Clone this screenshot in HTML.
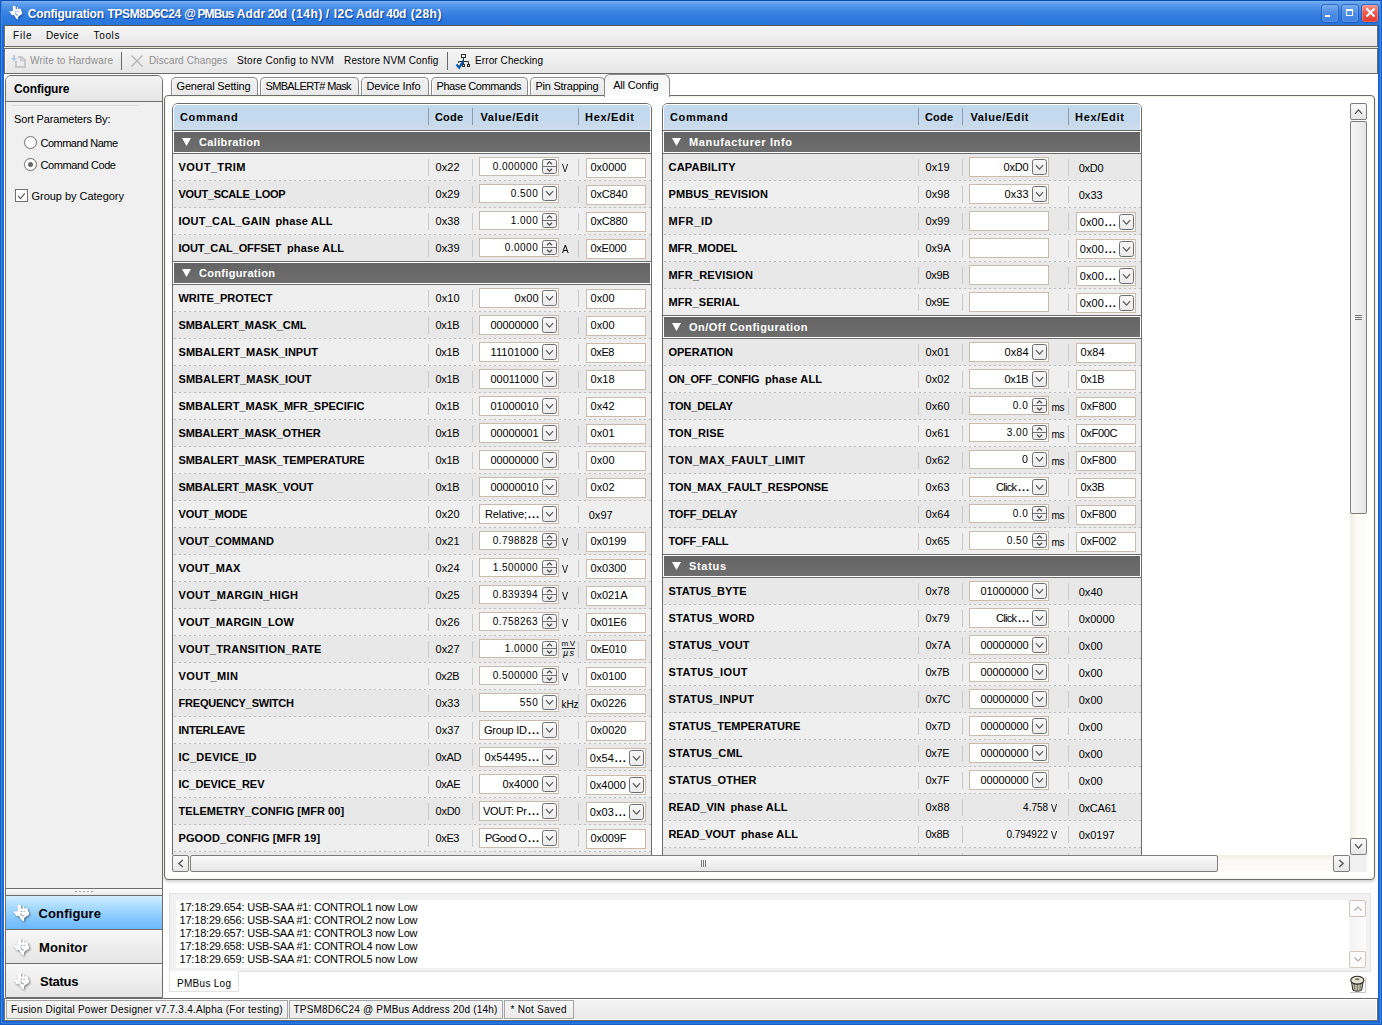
<!DOCTYPE html>
<html><head><meta charset="utf-8"><title>Configuration</title>
<style>
html,body{margin:0;padding:0}
body{width:1382px;height:1025px;overflow:hidden;position:relative;background:#2a70db;font-family:"Liberation Sans",sans-serif;color:#000}
div,svg,span{position:absolute;display:block}
span{white-space:pre;line-height:14px;height:14px}
.tr{font-size:11px}
.tr10{font-size:10px}
.tr9{font-size:9px}
.tr8{font-size:8px}
.tr9i{font-size:9px;font-style:italic}
.tb{font-size:11px;font-weight:bold}
.ms{font-size:10px}
.b12{font-size:12px;font-weight:bold}
.b13{font-size:13px;font-weight:bold}
.ttl{font-size:12px;font-weight:bold;text-shadow:1px 1px 1px #0c3c9c}
</style></head>
<body>
<div style="left:0px;top:0px;width:1382px;height:1025px;background:#1f6cd6"></div>
<div style="left:0px;top:0px;width:1382px;height:25px;background:linear-gradient(#0a4cb0 0,#0a4cb0 1px,#79b1f4 1px,#6fa9f1 2px,#5e9dec 4px,#4389e4 10px,#2f7bdf 17px,#2875dc 25px)"></div>
<div style="left:0px;top:0px;width:1px;height:1025px;background:#1a5cc2"></div>
<div style="left:1px;top:1px;width:1px;height:1023px;background:#3b88e4"></div>
<div style="left:2px;top:25px;width:2px;height:997px;background:#1c6ad5"></div>
<div style="left:1378px;top:25px;width:1px;height:997px;background:#1660cc"></div>
<div style="left:1379px;top:25px;width:1px;height:997px;background:#2070d8"></div>
<div style="left:1380px;top:1px;width:1px;height:1023px;background:#3b87e3"></div>
<div style="left:1381px;top:0px;width:1px;height:1025px;background:#1c60c8"></div>
<div style="left:2px;top:1021px;width:1378px;height:1px;background:#1b64d0"></div>
<div style="left:2px;top:1022px;width:1378px;height:1px;background:#2070d8"></div>
<div style="left:1px;top:1023px;width:1380px;height:1px;background:#2a7ade"></div>
<div style="left:0px;top:1024px;width:1382px;height:1px;background:#1a5cc4"></div>
<svg style="left:8.5px;top:6px;filter:drop-shadow(1px 1px 1px rgba(10,40,120,.5))" width="14" height="14" viewBox="0 0 17 17"><path d="M4.7 0H8v3l1.5 1 .5-2.8h1v2.6l1-.5h2.5l.5 2.7 1.1 1.5-.3 2.5L13 11.5 11.2 13l-.4 3.4L9 15.5l-2-3-1.2-1.9-1.2.7-1.4-.3L2 8.5 0 6.7l4.7-.5z" fill="#fff"/><path d="M7.8 6.4h1.2M10.5 6.4h1.2M8 8.2c0 1.9.4 2.6 1.5 2.6h1.3" stroke="#2d74d6" stroke-width="1.1" fill="none"/></svg>
<span class="ttl" style="letter-spacing:-0.2px;left:27.8px;top:7px;color:#fff">Configuration</span>
<span class="ttl" style="letter-spacing:-0.4px;left:107.5px;top:7px;color:#fff">TPSM8D6C24</span>
<span class="ttl" style="left:184.3px;top:7px;color:#fff">@</span>
<span class="ttl" style="letter-spacing:-0.92px;left:197.5px;top:7px;color:#fff">PMBus</span>
<span class="ttl" style="letter-spacing:0.17px;left:236.7px;top:7px;color:#fff">Addr</span>
<span class="ttl" style="letter-spacing:-0.69px;left:267.7px;top:7px;color:#fff">20d</span>
<span class="ttl" style="letter-spacing:0.63px;left:291.3px;top:7px;color:#fff">(14h)</span>
<span class="ttl" style="left:325.8px;top:7px;color:#fff">/</span>
<span class="ttl" style="letter-spacing:0.31px;left:333.8px;top:7px;color:#fff">I2C</span>
<span class="ttl" style="left:356.1px;top:7px;color:#fff">Addr</span>
<span class="ttl" style="letter-spacing:-0.29px;left:386.3px;top:7px;color:#fff">40d</span>
<span class="ttl" style="letter-spacing:0.51px;left:410.7px;top:7px;color:#fff">(28h)</span>
<div style="left:1322px;top:4.5px;width:16px;height:17px;background:linear-gradient(#78acee,#4c8de5 50%,#3e83e2);border-radius:3px;box-shadow:0 0 0 1px rgba(20,70,170,.55), inset 0 0 0 1px #7fb0ef66"></div>
<div style="left:1342px;top:4.5px;width:16px;height:17px;background:linear-gradient(#78acee,#4c8de5 50%,#3e83e2);border-radius:3px;box-shadow:0 0 0 1px rgba(20,70,170,.55), inset 0 0 0 1px #7fb0ef66"></div>
<div style="left:1362px;top:4.5px;width:16px;height:17px;background:linear-gradient(#f39a92,#ea5a50 45%,#e5382f);border-radius:3px;box-shadow:0 0 0 1px rgba(20,70,170,.55), inset 0 0 0 1px #f4b0a866"></div>
<div style="left:1325px;top:15px;width:5px;height:2px;background:#fff"></div>
<div style="left:1346px;top:9px;width:7px;height:7px;border:1px solid #fff;border-top:2px solid #fff;box-sizing:border-box"></div>
<svg style="left:1364px;top:6px" width="13" height="13" viewBox="0 0 13 13"><path d="M2.5 2.5l8 8M10.5 2.5l-8 8" stroke="#fff" stroke-width="2.1"/></svg>
<div style="left:4px;top:25px;width:1374px;height:996px;background:#fff"></div>
<div style="left:4px;top:25px;width:1374px;height:22px;background:linear-gradient(#f6f6f6,#e7e7e7);border:1px solid #6a6a6a;border-top-color:#5d574f;box-sizing:border-box;box-shadow:inset 1px 1px 0 #fff"></div>
<div style="left:4px;top:47px;width:1374px;height:1px;background:#ece9d8"></div>
<span class="ms" style="letter-spacing:0.79px;left:13px;top:29px">File</span>
<span class="ms" style="letter-spacing:0.38px;left:46px;top:29px">Device</span>
<span class="ms" style="letter-spacing:0.66px;left:93.5px;top:29px">Tools</span>
<div style="left:4px;top:48px;width:1374px;height:26px;background:linear-gradient(#f5f5f5,#e6e6e6);border:1px solid #6a6a6a;box-sizing:border-box;box-shadow:inset 1px 1px 0 #fff"></div>
<span class="ms" style="letter-spacing:0.16px;left:30px;top:54px;color:#8e8e8e">Write to Hardware</span>
<span class="ms" style="letter-spacing:0.13px;left:149px;top:54px;color:#8e8e8e">Discard Changes</span>
<span class="ms" style="letter-spacing:0.29px;left:237px;top:54px">Store Config to NVM</span>
<span class="ms" style="letter-spacing:0.16px;left:344px;top:54px">Restore NVM Config</span>
<span class="ms" style="letter-spacing:0.1px;left:475px;top:54px">Error Checking</span>
<div style="left:121px;top:52px;width:1px;height:18px;background:#666"></div>
<div style="left:447px;top:52px;width:1px;height:18px;background:#666"></div>
<svg style="left:10px;top:54px" width="17" height="15" viewBox="0 0 17 15"><path d="M3 1h2v3h2L4 7.6 1 4h2z" fill="#b3cbe2"/><path d="M8 3h3.5L15 6v7H6V7" fill="none" stroke="#c9c9c9" stroke-width="2"/><path d="M11 3v3.5h3.5" fill="none" stroke="#c9c9c9" stroke-width="1.6"/></svg>
<svg style="left:130px;top:54px" width="14" height="14" viewBox="0 0 14 14"><path d="M1.5 1.5l11 11M12.5 1.5l-11 11" stroke="#b9b9b9" stroke-width="1.5" fill="none"/></svg>
<svg style="left:455px;top:53px" width="16" height="17" viewBox="0 0 16 17"><g fill="none" stroke="#2f2f2f" stroke-width="1"><rect x="6.5" y="1.5" width="4" height="3"/><path d="M8.5 5v6M3.5 10V8.5h10V11"/><rect x="7.5" y="11.5" width="2" height="2"/><rect x="12.5" y="11.5" width="2" height="2"/></g><path d="M1.4 11.5l2.8 3.1L8.4 7.6" fill="none" stroke="#0b5aa9" stroke-width="2.2"/></svg>
<div style="left:5px;top:75px;width:158px;height:923px;background:#f0f0f0;border:1px solid #6d6d6d;border-radius:6px 6px 0 0;box-sizing:border-box"></div>
<div style="left:6px;top:76px;width:156px;height:25px;background:linear-gradient(#f3f3f3,#e6e6e6);border-radius:5px 5px 0 0"></div>
<div style="left:6px;top:101px;width:156px;height:1px;background:#6d6d6d"></div>
<span class="b12" style="letter-spacing:-0.15px;left:14px;top:82px">Configure</span>
<div style="left:12px;top:105px;width:126px;height:1px;background:#d9d9d9"></div>
<span class="tr" style="letter-spacing:-0.14px;left:14px;top:112px">Sort Parameters By:</span>
<div style="left:24px;top:136px;width:13px;height:13px;border-radius:50%;border:1px solid #747474;background:radial-gradient(circle at 45% 40%,#fff 45%,#f0f0f0);box-sizing:border-box;box-shadow:0 0 1px #ccc"></div>
<div style="left:24px;top:158px;width:13px;height:13px;border-radius:50%;border:1px solid #747474;background:radial-gradient(circle at 45% 40%,#fff 45%,#f0f0f0);box-sizing:border-box;box-shadow:0 0 1px #ccc"></div>
<div style="left:28px;top:162px;width:5px;height:5px;border-radius:50%;background:#666"></div>
<span class="tr" style="letter-spacing:-0.51px;left:40.5px;top:136px">Command Name</span>
<span class="tr" style="letter-spacing:-0.42px;left:40.5px;top:158px">Command Code</span>
<div style="left:15px;top:189px;width:13px;height:13px;border:1px solid #707070;background:#fff;box-sizing:border-box"></div>
<svg style="left:15px;top:189px" width="13" height="13" viewBox="0 0 13 13"><path d="M3.2 6.9l2.3 2.7L9.8 4.4" fill="none" stroke="#555" stroke-width="1.15"/></svg>
<span class="tr" style="letter-spacing:-0.03px;left:31.5px;top:189px">Group by Category</span>
<div style="left:6px;top:888px;width:156px;height:1px;background:#6d6d6d"></div>
<div style="left:6px;top:889px;width:156px;height:6px;background:linear-gradient(#fafafa,#e9e9e9)"></div>
<div style="left:75px;top:891px;width:2px;height:1px;background:#a9a9a9"></div>
<div style="left:79px;top:891px;width:2px;height:1px;background:#a9a9a9"></div>
<div style="left:83px;top:891px;width:2px;height:1px;background:#a9a9a9"></div>
<div style="left:87px;top:891px;width:2px;height:1px;background:#a9a9a9"></div>
<div style="left:91px;top:891px;width:2px;height:1px;background:#a9a9a9"></div>
<div style="left:6px;top:895px;width:156px;height:1px;background:#6d6d6d"></div>
<div style="left:6px;top:896px;width:156px;height:33px;background:linear-gradient(#d2efff 0,#aadbff 32%,#86c8fe 68%,#6ab8fb 100%)"></div>
<div style="left:6px;top:929px;width:156px;height:1px;background:#6d6d6d"></div>
<div style="left:6px;top:930px;width:156px;height:33px;background:linear-gradient(#f7f7f7,#e5e5e5)"></div>
<div style="left:6px;top:963px;width:156px;height:1px;background:#6d6d6d"></div>
<div style="left:6px;top:964px;width:156px;height:33px;background:linear-gradient(#f7f7f7,#e5e5e5)"></div>
<svg style="left:13px;top:905px;filter:drop-shadow(1px 1px 1px rgba(0,0,0,.5))" width="17" height="17" viewBox="0 0 17 17"><path d="M4.7 0H8v3l1.5 1 .5-2.8h1v2.6l1-.5h2.5l.5 2.7 1.1 1.5-.3 2.5L13 11.5 11.2 13l-.4 3.4L9 15.5l-2-3-1.2-1.9-1.2.7-1.4-.3L2 8.5 0 6.7l4.7-.5z" fill="#fff"/><path d="M7.8 6.4h1.2M10.5 6.4h1.2M8 8.2c0 1.9.4 2.6 1.5 2.6h1.3" stroke="#4f6f8c" stroke-width="1" fill="none" opacity=".8"/></svg>
<svg style="left:13px;top:939px;filter:drop-shadow(1px 1px 1px rgba(0,0,0,.5))" width="17" height="17" viewBox="0 0 17 17"><path d="M4.7 0H8v3l1.5 1 .5-2.8h1v2.6l1-.5h2.5l.5 2.7 1.1 1.5-.3 2.5L13 11.5 11.2 13l-.4 3.4L9 15.5l-2-3-1.2-1.9-1.2.7-1.4-.3L2 8.5 0 6.7l4.7-.5z" fill="#fff"/><path d="M7.8 6.4h1.2M10.5 6.4h1.2M8 8.2c0 1.9.4 2.6 1.5 2.6h1.3" stroke="#4f6f8c" stroke-width="1" fill="none" opacity=".8"/></svg>
<svg style="left:13px;top:973px;filter:drop-shadow(1px 1px 1px rgba(0,0,0,.5))" width="17" height="17" viewBox="0 0 17 17"><path d="M4.7 0H8v3l1.5 1 .5-2.8h1v2.6l1-.5h2.5l.5 2.7 1.1 1.5-.3 2.5L13 11.5 11.2 13l-.4 3.4L9 15.5l-2-3-1.2-1.9-1.2.7-1.4-.3L2 8.5 0 6.7l4.7-.5z" fill="#fff"/><path d="M7.8 6.4h1.2M10.5 6.4h1.2M8 8.2c0 1.9.4 2.6 1.5 2.6h1.3" stroke="#4f6f8c" stroke-width="1" fill="none" opacity=".8"/></svg>
<span class="b13" style="letter-spacing:0.14px;left:38.5px;top:907px">Configure</span>
<span class="b13" style="letter-spacing:0.14px;left:39px;top:941px">Monitor</span>
<span class="b13" style="letter-spacing:-0.25px;left:40px;top:975px">Status</span>
<div style="left:171px;top:77px;width:87px;height:19px;background:linear-gradient(#f2f2f2,#e9e9e9);border:1px solid #8a8a8a;border-bottom:none;border-radius:5px 5px 0 0;box-sizing:border-box;box-shadow:inset 1px 1px 0 #fff"></div>
<span class="tr" style="letter-spacing:-0.17px;left:176.5px;top:79px">General Setting</span>
<div style="left:260px;top:77px;width:99px;height:19px;background:linear-gradient(#f2f2f2,#e9e9e9);border:1px solid #8a8a8a;border-bottom:none;border-radius:5px 5px 0 0;box-sizing:border-box;box-shadow:inset 1px 1px 0 #fff"></div>
<span class="tr" style="letter-spacing:-0.66px;left:265.5px;top:79px">SMBALERT# Mask</span>
<div style="left:361px;top:77px;width:68px;height:19px;background:linear-gradient(#f2f2f2,#e9e9e9);border:1px solid #8a8a8a;border-bottom:none;border-radius:5px 5px 0 0;box-sizing:border-box;box-shadow:inset 1px 1px 0 #fff"></div>
<span class="tr" style="letter-spacing:-0.1px;left:366.5px;top:79px">Device Info</span>
<div style="left:431px;top:77px;width:97px;height:19px;background:linear-gradient(#f2f2f2,#e9e9e9);border:1px solid #8a8a8a;border-bottom:none;border-radius:5px 5px 0 0;box-sizing:border-box;box-shadow:inset 1px 1px 0 #fff"></div>
<span class="tr" style="letter-spacing:-0.42px;left:436.5px;top:79px">Phase Commands</span>
<div style="left:530px;top:77px;width:75px;height:19px;background:linear-gradient(#f2f2f2,#e9e9e9);border:1px solid #8a8a8a;border-bottom:none;border-radius:5px 5px 0 0;box-sizing:border-box;box-shadow:inset 1px 1px 0 #fff"></div>
<span class="tr" style="letter-spacing:-0.25px;left:535.5px;top:79px">Pin Strapping</span>
<div style="left:164px;top:95px;width:1211px;height:785px;background:#fff;border:1px solid #6d6d6d;border-radius:4px;box-sizing:border-box;box-shadow:0 2px 3px rgba(0,0,0,.18),inset 0 0 0 1px #f6f3ec"></div>
<div style="left:604px;top:74px;width:66px;height:23px;background:linear-gradient(#f5f5f5,#f8f8f8 70%,#fff);border:1px solid #8a8a8a;border-bottom:none;border-radius:6px 6px 0 0;box-sizing:border-box"></div>
<span class="tr" style="letter-spacing:-0.19px;left:613.2px;top:78px">All Config</span>
<div style="left:165px;top:96px;width:1185px;height:759px;overflow:hidden"><div style="left:-165px;top:-96px;width:1382px;height:1025px">
<div style="left:172px;top:103px;width:480px;height:760px;border:1px solid #6b6b6b;border-radius:6px 6px 0 0;background:#fff;box-sizing:border-box"></div>
<div style="left:173px;top:104px;width:478px;height:26px;background:linear-gradient(#c3d9ee 0,#c3d9ee 50%,#ccdcea 100%);border-radius:5px 5px 0 0;border:1px solid #fff;border-bottom:none;box-sizing:border-box"></div>
<div style="left:173px;top:130px;width:478px;height:1px;background:#6b6b6b"></div>
<span class="tb" style="letter-spacing:0.65px;left:180px;top:110px">Command</span>
<span class="tb" style="letter-spacing:0.17px;left:435px;top:110px">Code</span>
<span class="tb" style="letter-spacing:0.6px;left:480.5px;top:110px">Value/Edit</span>
<span class="tb" style="letter-spacing:0.71px;left:585px;top:110px">Hex/Edit</span>
<div style="left:428px;top:108px;width:1px;height:17px;background:#8d99a6"></div>
<div style="left:472px;top:108px;width:1px;height:17px;background:#8d99a6"></div>
<div style="left:578px;top:108px;width:1px;height:17px;background:#8d99a6"></div>
<div style="left:173px;top:131px;width:478px;height:23px;background:#fff"></div>
<div style="left:174px;top:132px;width:476px;height:20px;background:linear-gradient(#646464,#6e6e6e)"></div>
<div style="left:173px;top:153px;width:478px;height:1px;background:#6b6b6b"></div>
<svg style="left:182px;top:138px" width="9" height="8" viewBox="0 0 9 8"><path d="M0 0h9L4.5 8z" fill="#fff"/></svg>
<span class="tb" style="letter-spacing:0.35px;left:199px;top:135px;color:#fff">Calibration</span>
<div style="left:173px;top:154px;width:478px;height:27px;background:#efefef"></div>
<div style="left:173px;top:180px;width:478px;height:1px;background:repeating-linear-gradient(90deg,transparent 0,transparent 1px,#bcbcbc 1px,#bcbcbc 3px,transparent 3px,transparent 5px)"></div>
<div style="left:428px;top:159px;width:1px;height:17px;background:#c9c9c9"></div>
<div style="left:472px;top:159px;width:1px;height:17px;background:#c9c9c9"></div>
<div style="left:578px;top:159px;width:1px;height:17px;background:#c9c9c9"></div>
<span class="tb" style="letter-spacing:0.43px;left:178.5px;top:160px">VOUT_TRIM</span>
<span class="tr" style="letter-spacing:0.05px;left:435.5px;top:160px">0x22</span>
<div style="left:479px;top:157px;width:80px;height:19px;border:1px solid #c9bcae;background:#fff;box-sizing:border-box"></div>
<div style="left:542px;top:159px;width:15px;height:15px;border:1px solid #6e6e6e;border-radius:2.5px;background:linear-gradient(#f8f8f8,#ebebeb);box-sizing:border-box"></div>
<div style="left:543px;top:166px;width:13px;height:1px;background:#6e6e6e"></div>
<svg style="left:546px;top:160px" width="7" height="13" viewBox="0 0 7 13"><path d="M1 4.3l2.5-2.5L6 4.3M1 8.7l2.5 2.5L6 8.7" fill="none" stroke="#4a4a4a" stroke-width="1.25"/></svg>
<span class="tr10" style="letter-spacing:0.47px;right:843.83px;text-align:right;top:160px">0.000000</span>
<span class="tr10" style="transform:scaleX(0.914);transform-origin:0 0;left:561.5px;top:162px">V</span>
<div style="left:586px;top:158px;width:60px;height:20px;border:1px solid #c9bcae;background:#fff;box-sizing:border-box"></div>
<span class="tr" style="letter-spacing:-0.02px;left:590.5px;top:160px">0x0000</span>
<div style="left:173px;top:181px;width:478px;height:27px;background:#e8e8e8"></div>
<div style="left:173px;top:207px;width:478px;height:1px;background:repeating-linear-gradient(90deg,transparent 0,transparent 1px,#bcbcbc 1px,#bcbcbc 3px,transparent 3px,transparent 5px)"></div>
<div style="left:428px;top:186px;width:1px;height:17px;background:#c9c9c9"></div>
<div style="left:472px;top:186px;width:1px;height:17px;background:#c9c9c9"></div>
<div style="left:578px;top:186px;width:1px;height:17px;background:#c9c9c9"></div>
<span class="tb" style="letter-spacing:-0.3px;left:178.5px;top:187px">VOUT_SCALE_LOOP</span>
<span class="tr" style="letter-spacing:0.05px;left:435.5px;top:187px">0x29</span>
<div style="left:479px;top:184px;width:80px;height:19px;border:1px solid #c9bcae;background:#fff;box-sizing:border-box"></div>
<div style="left:542px;top:186px;width:15px;height:15px;border:1px solid #6e6e6e;border-radius:2.5px;background:linear-gradient(#f8f8f8,#ebebeb);box-sizing:border-box"></div>
<svg style="left:545px;top:190px" width="9" height="7" viewBox="0 0 9 7"><path d="M0.9 1.1l3.6 4.1 3.6-4.1" fill="none" stroke="#505050" stroke-width="1.05"/></svg>
<span class="tr10" style="letter-spacing:0.49px;right:843.81px;text-align:right;top:187px">0.500</span>
<div style="left:586px;top:185px;width:60px;height:20px;border:1px solid #c9bcae;background:#fff;box-sizing:border-box"></div>
<span class="tr" style="letter-spacing:-0.18px;left:590.5px;top:187px">0xC840</span>
<div style="left:173px;top:208px;width:478px;height:27px;background:#efefef"></div>
<div style="left:173px;top:234px;width:478px;height:1px;background:repeating-linear-gradient(90deg,transparent 0,transparent 1px,#bcbcbc 1px,#bcbcbc 3px,transparent 3px,transparent 5px)"></div>
<div style="left:428px;top:213px;width:1px;height:17px;background:#c9c9c9"></div>
<div style="left:472px;top:213px;width:1px;height:17px;background:#c9c9c9"></div>
<div style="left:578px;top:213px;width:1px;height:17px;background:#c9c9c9"></div>
<span class="tb" style="letter-spacing:0.24px;left:178.5px;top:214px">IOUT_CAL_GAIN</span>
<span class="tb" style="letter-spacing:0.15px;left:275.5px;top:214px">phase ALL</span>
<span class="tr" style="letter-spacing:0.05px;left:435.5px;top:214px">0x38</span>
<div style="left:479px;top:211px;width:80px;height:19px;border:1px solid #c9bcae;background:#fff;box-sizing:border-box"></div>
<div style="left:542px;top:213px;width:15px;height:15px;border:1px solid #6e6e6e;border-radius:2.5px;background:linear-gradient(#f8f8f8,#ebebeb);box-sizing:border-box"></div>
<div style="left:543px;top:220px;width:13px;height:1px;background:#6e6e6e"></div>
<svg style="left:546px;top:214px" width="7" height="13" viewBox="0 0 7 13"><path d="M1 4.3l2.5-2.5L6 4.3M1 8.7l2.5 2.5L6 8.7" fill="none" stroke="#4a4a4a" stroke-width="1.25"/></svg>
<span class="tr10" style="letter-spacing:0.49px;right:843.81px;text-align:right;top:214px">1.000</span>
<div style="left:586px;top:212px;width:60px;height:20px;border:1px solid #c9bcae;background:#fff;box-sizing:border-box"></div>
<span class="tr" style="letter-spacing:-0.18px;left:590.5px;top:214px">0xC880</span>
<div style="left:173px;top:235px;width:478px;height:27px;background:#e8e8e8"></div>
<div style="left:173px;top:261px;width:478px;height:1px;background:#6b6b6b"></div>
<div style="left:428px;top:240px;width:1px;height:17px;background:#c9c9c9"></div>
<div style="left:472px;top:240px;width:1px;height:17px;background:#c9c9c9"></div>
<div style="left:578px;top:240px;width:1px;height:17px;background:#c9c9c9"></div>
<span class="tb" style="letter-spacing:-0.11px;left:178.5px;top:241px">IOUT_CAL_OFFSET</span>
<span class="tb" style="letter-spacing:0.15px;left:287px;top:241px">phase ALL</span>
<span class="tr" style="letter-spacing:0.05px;left:435.5px;top:241px">0x39</span>
<div style="left:479px;top:238px;width:80px;height:19px;border:1px solid #c9bcae;background:#fff;box-sizing:border-box"></div>
<div style="left:542px;top:240px;width:15px;height:15px;border:1px solid #6e6e6e;border-radius:2.5px;background:linear-gradient(#f8f8f8,#ebebeb);box-sizing:border-box"></div>
<div style="left:543px;top:247px;width:13px;height:1px;background:#6e6e6e"></div>
<svg style="left:546px;top:241px" width="7" height="13" viewBox="0 0 7 13"><path d="M1 4.3l2.5-2.5L6 4.3M1 8.7l2.5 2.5L6 8.7" fill="none" stroke="#4a4a4a" stroke-width="1.25"/></svg>
<span class="tr10" style="letter-spacing:0.48px;right:843.82px;text-align:right;top:241px">0.0000</span>
<span class="tr10" style="transform:scaleX(0.989);transform-origin:0 0;left:561.5px;top:243px">A</span>
<div style="left:586px;top:239px;width:60px;height:20px;border:1px solid #c9bcae;background:#fff;box-sizing:border-box"></div>
<span class="tr" style="letter-spacing:-0.26px;left:590.5px;top:241px">0xE000</span>
<div style="left:173px;top:262px;width:478px;height:23px;background:#fff"></div>
<div style="left:174px;top:263px;width:476px;height:20px;background:linear-gradient(#646464,#6e6e6e)"></div>
<div style="left:173px;top:284px;width:478px;height:1px;background:#6b6b6b"></div>
<svg style="left:182px;top:269px" width="9" height="8" viewBox="0 0 9 8"><path d="M0 0h9L4.5 8z" fill="#fff"/></svg>
<span class="tb" style="letter-spacing:0.32px;left:199px;top:266px;color:#fff">Configuration</span>
<div style="left:173px;top:285px;width:478px;height:27px;background:#efefef"></div>
<div style="left:173px;top:311px;width:478px;height:1px;background:repeating-linear-gradient(90deg,transparent 0,transparent 1px,#bcbcbc 1px,#bcbcbc 3px,transparent 3px,transparent 5px)"></div>
<div style="left:428px;top:290px;width:1px;height:17px;background:#c9c9c9"></div>
<div style="left:472px;top:290px;width:1px;height:17px;background:#c9c9c9"></div>
<div style="left:578px;top:290px;width:1px;height:17px;background:#c9c9c9"></div>
<span class="tb" style="letter-spacing:-0.01px;left:178.5px;top:291px">WRITE_PROTECT</span>
<span class="tr" style="letter-spacing:0.05px;left:435.5px;top:291px">0x10</span>
<div style="left:479px;top:288px;width:80px;height:20px;border:1px solid #c9bcae;background:#fff;box-sizing:border-box"></div>
<div style="left:542px;top:290px;width:15px;height:16px;border:1px solid #6e6e6e;border-radius:2.5px;background:linear-gradient(#f8f8f8,#ebebeb);box-sizing:border-box"></div>
<svg style="left:545px;top:294.5px" width="9" height="7" viewBox="0 0 9 7"><path d="M0.9 1.1l3.6 4.1 3.6-4.1" fill="none" stroke="#505050" stroke-width="1.05"/></svg>
<span class="tr" style="letter-spacing:0.05px;right:843.45px;text-align:right;top:291px">0x00</span>
<div style="left:586px;top:289px;width:60px;height:20px;border:1px solid #c9bcae;background:#fff;box-sizing:border-box"></div>
<span class="tr" style="letter-spacing:0.05px;left:590.5px;top:291px">0x00</span>
<div style="left:173px;top:312px;width:478px;height:27px;background:#e8e8e8"></div>
<div style="left:173px;top:338px;width:478px;height:1px;background:repeating-linear-gradient(90deg,transparent 0,transparent 1px,#bcbcbc 1px,#bcbcbc 3px,transparent 3px,transparent 5px)"></div>
<div style="left:428px;top:317px;width:1px;height:17px;background:#c9c9c9"></div>
<div style="left:472px;top:317px;width:1px;height:17px;background:#c9c9c9"></div>
<div style="left:578px;top:317px;width:1px;height:17px;background:#c9c9c9"></div>
<span class="tb" style="letter-spacing:-0.1px;left:178.5px;top:318px">SMBALERT_MASK_CML</span>
<span class="tr" style="letter-spacing:-0.36px;left:435.5px;top:318px">0x1B</span>
<div style="left:479px;top:315px;width:80px;height:20px;border:1px solid #c9bcae;background:#fff;box-sizing:border-box"></div>
<div style="left:542px;top:317px;width:15px;height:16px;border:1px solid #6e6e6e;border-radius:2.5px;background:linear-gradient(#f8f8f8,#ebebeb);box-sizing:border-box"></div>
<svg style="left:545px;top:321.5px" width="9" height="7" viewBox="0 0 9 7"><path d="M0.9 1.1l3.6 4.1 3.6-4.1" fill="none" stroke="#505050" stroke-width="1.05"/></svg>
<span class="tr" style="letter-spacing:-0.14px;right:843.64px;text-align:right;top:318px">00000000</span>
<div style="left:586px;top:316px;width:60px;height:20px;border:1px solid #c9bcae;background:#fff;box-sizing:border-box"></div>
<span class="tr" style="letter-spacing:0.05px;left:590.5px;top:318px">0x00</span>
<div style="left:173px;top:339px;width:478px;height:27px;background:#efefef"></div>
<div style="left:173px;top:365px;width:478px;height:1px;background:repeating-linear-gradient(90deg,transparent 0,transparent 1px,#bcbcbc 1px,#bcbcbc 3px,transparent 3px,transparent 5px)"></div>
<div style="left:428px;top:344px;width:1px;height:17px;background:#c9c9c9"></div>
<div style="left:472px;top:344px;width:1px;height:17px;background:#c9c9c9"></div>
<div style="left:578px;top:344px;width:1px;height:17px;background:#c9c9c9"></div>
<span class="tb" style="letter-spacing:0.04px;left:178.5px;top:345px">SMBALERT_MASK_INPUT</span>
<span class="tr" style="letter-spacing:-0.36px;left:435.5px;top:345px">0x1B</span>
<div style="left:479px;top:342px;width:80px;height:20px;border:1px solid #c9bcae;background:#fff;box-sizing:border-box"></div>
<div style="left:542px;top:344px;width:15px;height:16px;border:1px solid #6e6e6e;border-radius:2.5px;background:linear-gradient(#f8f8f8,#ebebeb);box-sizing:border-box"></div>
<svg style="left:545px;top:348.5px" width="9" height="7" viewBox="0 0 9 7"><path d="M0.9 1.1l3.6 4.1 3.6-4.1" fill="none" stroke="#505050" stroke-width="1.05"/></svg>
<span class="tr" style="letter-spacing:0.1px;right:843.40px;text-align:right;top:345px">11101000</span>
<div style="left:586px;top:343px;width:60px;height:20px;border:1px solid #c9bcae;background:#fff;box-sizing:border-box"></div>
<span class="tr" style="letter-spacing:-0.36px;left:590.5px;top:345px">0xE8</span>
<div style="left:173px;top:366px;width:478px;height:27px;background:#e8e8e8"></div>
<div style="left:173px;top:392px;width:478px;height:1px;background:repeating-linear-gradient(90deg,transparent 0,transparent 1px,#bcbcbc 1px,#bcbcbc 3px,transparent 3px,transparent 5px)"></div>
<div style="left:428px;top:371px;width:1px;height:17px;background:#c9c9c9"></div>
<div style="left:472px;top:371px;width:1px;height:17px;background:#c9c9c9"></div>
<div style="left:578px;top:371px;width:1px;height:17px;background:#c9c9c9"></div>
<span class="tb" style="letter-spacing:0.06px;left:178.5px;top:372px">SMBALERT_MASK_IOUT</span>
<span class="tr" style="letter-spacing:-0.36px;left:435.5px;top:372px">0x1B</span>
<div style="left:479px;top:369px;width:80px;height:20px;border:1px solid #c9bcae;background:#fff;box-sizing:border-box"></div>
<div style="left:542px;top:371px;width:15px;height:16px;border:1px solid #6e6e6e;border-radius:2.5px;background:linear-gradient(#f8f8f8,#ebebeb);box-sizing:border-box"></div>
<svg style="left:545px;top:375.5px" width="9" height="7" viewBox="0 0 9 7"><path d="M0.9 1.1l3.6 4.1 3.6-4.1" fill="none" stroke="#505050" stroke-width="1.05"/></svg>
<span class="tr" style="letter-spacing:-0.02px;right:843.52px;text-align:right;top:372px">00011000</span>
<div style="left:586px;top:370px;width:60px;height:20px;border:1px solid #c9bcae;background:#fff;box-sizing:border-box"></div>
<span class="tr" style="letter-spacing:0.05px;left:590.5px;top:372px">0x18</span>
<div style="left:173px;top:393px;width:478px;height:27px;background:#efefef"></div>
<div style="left:173px;top:419px;width:478px;height:1px;background:repeating-linear-gradient(90deg,transparent 0,transparent 1px,#bcbcbc 1px,#bcbcbc 3px,transparent 3px,transparent 5px)"></div>
<div style="left:428px;top:398px;width:1px;height:17px;background:#c9c9c9"></div>
<div style="left:472px;top:398px;width:1px;height:17px;background:#c9c9c9"></div>
<div style="left:578px;top:398px;width:1px;height:17px;background:#c9c9c9"></div>
<span class="tb" style="letter-spacing:-0.02px;left:178.5px;top:399px">SMBALERT_MASK_MFR_SPECIFIC</span>
<span class="tr" style="letter-spacing:-0.36px;left:435.5px;top:399px">0x1B</span>
<div style="left:479px;top:396px;width:80px;height:20px;border:1px solid #c9bcae;background:#fff;box-sizing:border-box"></div>
<div style="left:542px;top:398px;width:15px;height:16px;border:1px solid #6e6e6e;border-radius:2.5px;background:linear-gradient(#f8f8f8,#ebebeb);box-sizing:border-box"></div>
<svg style="left:545px;top:402.5px" width="9" height="7" viewBox="0 0 9 7"><path d="M0.9 1.1l3.6 4.1 3.6-4.1" fill="none" stroke="#505050" stroke-width="1.05"/></svg>
<span class="tr" style="letter-spacing:-0.14px;right:843.64px;text-align:right;top:399px">01000010</span>
<div style="left:586px;top:397px;width:60px;height:20px;border:1px solid #c9bcae;background:#fff;box-sizing:border-box"></div>
<span class="tr" style="letter-spacing:0.05px;left:590.5px;top:399px">0x42</span>
<div style="left:173px;top:420px;width:478px;height:27px;background:#e8e8e8"></div>
<div style="left:173px;top:446px;width:478px;height:1px;background:repeating-linear-gradient(90deg,transparent 0,transparent 1px,#bcbcbc 1px,#bcbcbc 3px,transparent 3px,transparent 5px)"></div>
<div style="left:428px;top:425px;width:1px;height:17px;background:#c9c9c9"></div>
<div style="left:472px;top:425px;width:1px;height:17px;background:#c9c9c9"></div>
<div style="left:578px;top:425px;width:1px;height:17px;background:#c9c9c9"></div>
<span class="tb" style="letter-spacing:-0.12px;left:178.5px;top:426px">SMBALERT_MASK_OTHER</span>
<span class="tr" style="letter-spacing:-0.36px;left:435.5px;top:426px">0x1B</span>
<div style="left:479px;top:423px;width:80px;height:20px;border:1px solid #c9bcae;background:#fff;box-sizing:border-box"></div>
<div style="left:542px;top:425px;width:15px;height:16px;border:1px solid #6e6e6e;border-radius:2.5px;background:linear-gradient(#f8f8f8,#ebebeb);box-sizing:border-box"></div>
<svg style="left:545px;top:429.5px" width="9" height="7" viewBox="0 0 9 7"><path d="M0.9 1.1l3.6 4.1 3.6-4.1" fill="none" stroke="#505050" stroke-width="1.05"/></svg>
<span class="tr" style="letter-spacing:-0.14px;right:843.64px;text-align:right;top:426px">00000001</span>
<div style="left:586px;top:424px;width:60px;height:20px;border:1px solid #c9bcae;background:#fff;box-sizing:border-box"></div>
<span class="tr" style="letter-spacing:0.05px;left:590.5px;top:426px">0x01</span>
<div style="left:173px;top:447px;width:478px;height:27px;background:#efefef"></div>
<div style="left:173px;top:473px;width:478px;height:1px;background:repeating-linear-gradient(90deg,transparent 0,transparent 1px,#bcbcbc 1px,#bcbcbc 3px,transparent 3px,transparent 5px)"></div>
<div style="left:428px;top:452px;width:1px;height:17px;background:#c9c9c9"></div>
<div style="left:472px;top:452px;width:1px;height:17px;background:#c9c9c9"></div>
<div style="left:578px;top:452px;width:1px;height:17px;background:#c9c9c9"></div>
<span class="tb" style="letter-spacing:-0.11px;left:178.5px;top:453px">SMBALERT_MASK_TEMPERATURE</span>
<span class="tr" style="letter-spacing:-0.36px;left:435.5px;top:453px">0x1B</span>
<div style="left:479px;top:450px;width:80px;height:20px;border:1px solid #c9bcae;background:#fff;box-sizing:border-box"></div>
<div style="left:542px;top:452px;width:15px;height:16px;border:1px solid #6e6e6e;border-radius:2.5px;background:linear-gradient(#f8f8f8,#ebebeb);box-sizing:border-box"></div>
<svg style="left:545px;top:456.5px" width="9" height="7" viewBox="0 0 9 7"><path d="M0.9 1.1l3.6 4.1 3.6-4.1" fill="none" stroke="#505050" stroke-width="1.05"/></svg>
<span class="tr" style="letter-spacing:-0.14px;right:843.64px;text-align:right;top:453px">00000000</span>
<div style="left:586px;top:451px;width:60px;height:20px;border:1px solid #c9bcae;background:#fff;box-sizing:border-box"></div>
<span class="tr" style="letter-spacing:0.05px;left:590.5px;top:453px">0x00</span>
<div style="left:173px;top:474px;width:478px;height:27px;background:#e8e8e8"></div>
<div style="left:173px;top:500px;width:478px;height:1px;background:repeating-linear-gradient(90deg,transparent 0,transparent 1px,#bcbcbc 1px,#bcbcbc 3px,transparent 3px,transparent 5px)"></div>
<div style="left:428px;top:479px;width:1px;height:17px;background:#c9c9c9"></div>
<div style="left:472px;top:479px;width:1px;height:17px;background:#c9c9c9"></div>
<div style="left:578px;top:479px;width:1px;height:17px;background:#c9c9c9"></div>
<span class="tb" style="letter-spacing:-0.08px;left:178.5px;top:480px">SMBALERT_MASK_VOUT</span>
<span class="tr" style="letter-spacing:-0.36px;left:435.5px;top:480px">0x1B</span>
<div style="left:479px;top:477px;width:80px;height:20px;border:1px solid #c9bcae;background:#fff;box-sizing:border-box"></div>
<div style="left:542px;top:479px;width:15px;height:16px;border:1px solid #6e6e6e;border-radius:2.5px;background:linear-gradient(#f8f8f8,#ebebeb);box-sizing:border-box"></div>
<svg style="left:545px;top:483.5px" width="9" height="7" viewBox="0 0 9 7"><path d="M0.9 1.1l3.6 4.1 3.6-4.1" fill="none" stroke="#505050" stroke-width="1.05"/></svg>
<span class="tr" style="letter-spacing:-0.14px;right:843.64px;text-align:right;top:480px">00000010</span>
<div style="left:586px;top:478px;width:60px;height:20px;border:1px solid #c9bcae;background:#fff;box-sizing:border-box"></div>
<span class="tr" style="letter-spacing:0.05px;left:590.5px;top:480px">0x02</span>
<div style="left:173px;top:501px;width:478px;height:27px;background:#efefef"></div>
<div style="left:173px;top:527px;width:478px;height:1px;background:repeating-linear-gradient(90deg,transparent 0,transparent 1px,#bcbcbc 1px,#bcbcbc 3px,transparent 3px,transparent 5px)"></div>
<div style="left:428px;top:506px;width:1px;height:17px;background:#c9c9c9"></div>
<div style="left:472px;top:506px;width:1px;height:17px;background:#c9c9c9"></div>
<div style="left:578px;top:506px;width:1px;height:17px;background:#c9c9c9"></div>
<span class="tb" style="letter-spacing:-0.09px;left:178.5px;top:507px">VOUT_MODE</span>
<span class="tr" style="letter-spacing:0.05px;left:435.5px;top:507px">0x20</span>
<div style="left:479px;top:504px;width:80px;height:20px;border:1px solid #c9bcae;background:#fff;box-sizing:border-box"></div>
<div style="left:542px;top:506px;width:15px;height:16px;border:1px solid #6e6e6e;border-radius:2.5px;background:linear-gradient(#f8f8f8,#ebebeb);box-sizing:border-box"></div>
<svg style="left:545px;top:510.5px" width="9" height="7" viewBox="0 0 9 7"><path d="M0.9 1.1l3.6 4.1 3.6-4.1" fill="none" stroke="#505050" stroke-width="1.05"/></svg>
<span class="tr" style="letter-spacing:-0.1px;left:485px;top:507px">Relative;</span>
<span class="tb" style="letter-spacing:0.91px;left:528px;top:507px">...</span>
<span class="tr" style="letter-spacing:0.05px;left:588.7px;top:508px">0x97</span>
<div style="left:173px;top:528px;width:478px;height:27px;background:#e8e8e8"></div>
<div style="left:173px;top:554px;width:478px;height:1px;background:repeating-linear-gradient(90deg,transparent 0,transparent 1px,#bcbcbc 1px,#bcbcbc 3px,transparent 3px,transparent 5px)"></div>
<div style="left:428px;top:533px;width:1px;height:17px;background:#c9c9c9"></div>
<div style="left:472px;top:533px;width:1px;height:17px;background:#c9c9c9"></div>
<div style="left:578px;top:533px;width:1px;height:17px;background:#c9c9c9"></div>
<span class="tb" style="letter-spacing:0.01px;left:178.5px;top:534px">VOUT_COMMAND</span>
<span class="tr" style="letter-spacing:0.05px;left:435.5px;top:534px">0x21</span>
<div style="left:479px;top:531px;width:80px;height:19px;border:1px solid #c9bcae;background:#fff;box-sizing:border-box"></div>
<div style="left:542px;top:533px;width:15px;height:15px;border:1px solid #6e6e6e;border-radius:2.5px;background:linear-gradient(#f8f8f8,#ebebeb);box-sizing:border-box"></div>
<div style="left:543px;top:540px;width:13px;height:1px;background:#6e6e6e"></div>
<svg style="left:546px;top:534px" width="7" height="13" viewBox="0 0 7 13"><path d="M1 4.3l2.5-2.5L6 4.3M1 8.7l2.5 2.5L6 8.7" fill="none" stroke="#4a4a4a" stroke-width="1.25"/></svg>
<span class="tr10" style="letter-spacing:0.47px;right:843.83px;text-align:right;top:534px">0.798828</span>
<span class="tr10" style="transform:scaleX(0.914);transform-origin:0 0;left:561.5px;top:536px">V</span>
<div style="left:586px;top:532px;width:60px;height:20px;border:1px solid #c9bcae;background:#fff;box-sizing:border-box"></div>
<span class="tr" style="letter-spacing:-0.02px;left:590.5px;top:534px">0x0199</span>
<div style="left:173px;top:555px;width:478px;height:27px;background:#efefef"></div>
<div style="left:173px;top:581px;width:478px;height:1px;background:repeating-linear-gradient(90deg,transparent 0,transparent 1px,#bcbcbc 1px,#bcbcbc 3px,transparent 3px,transparent 5px)"></div>
<div style="left:428px;top:560px;width:1px;height:17px;background:#c9c9c9"></div>
<div style="left:472px;top:560px;width:1px;height:17px;background:#c9c9c9"></div>
<div style="left:578px;top:560px;width:1px;height:17px;background:#c9c9c9"></div>
<span class="tb" style="letter-spacing:0.12px;left:178.5px;top:561px">VOUT_MAX</span>
<span class="tr" style="letter-spacing:0.05px;left:435.5px;top:561px">0x24</span>
<div style="left:479px;top:558px;width:80px;height:19px;border:1px solid #c9bcae;background:#fff;box-sizing:border-box"></div>
<div style="left:542px;top:560px;width:15px;height:15px;border:1px solid #6e6e6e;border-radius:2.5px;background:linear-gradient(#f8f8f8,#ebebeb);box-sizing:border-box"></div>
<div style="left:543px;top:567px;width:13px;height:1px;background:#6e6e6e"></div>
<svg style="left:546px;top:561px" width="7" height="13" viewBox="0 0 7 13"><path d="M1 4.3l2.5-2.5L6 4.3M1 8.7l2.5 2.5L6 8.7" fill="none" stroke="#4a4a4a" stroke-width="1.25"/></svg>
<span class="tr10" style="letter-spacing:0.47px;right:843.83px;text-align:right;top:561px">1.500000</span>
<span class="tr10" style="transform:scaleX(0.914);transform-origin:0 0;left:561.5px;top:563px">V</span>
<div style="left:586px;top:559px;width:60px;height:20px;border:1px solid #c9bcae;background:#fff;box-sizing:border-box"></div>
<span class="tr" style="letter-spacing:-0.02px;left:590.5px;top:561px">0x0300</span>
<div style="left:173px;top:582px;width:478px;height:27px;background:#e8e8e8"></div>
<div style="left:173px;top:608px;width:478px;height:1px;background:repeating-linear-gradient(90deg,transparent 0,transparent 1px,#bcbcbc 1px,#bcbcbc 3px,transparent 3px,transparent 5px)"></div>
<div style="left:428px;top:587px;width:1px;height:17px;background:#c9c9c9"></div>
<div style="left:472px;top:587px;width:1px;height:17px;background:#c9c9c9"></div>
<div style="left:578px;top:587px;width:1px;height:17px;background:#c9c9c9"></div>
<span class="tb" style="letter-spacing:0.31px;left:178.5px;top:588px">VOUT_MARGIN_HIGH</span>
<span class="tr" style="letter-spacing:0.05px;left:435.5px;top:588px">0x25</span>
<div style="left:479px;top:585px;width:80px;height:19px;border:1px solid #c9bcae;background:#fff;box-sizing:border-box"></div>
<div style="left:542px;top:587px;width:15px;height:15px;border:1px solid #6e6e6e;border-radius:2.5px;background:linear-gradient(#f8f8f8,#ebebeb);box-sizing:border-box"></div>
<div style="left:543px;top:594px;width:13px;height:1px;background:#6e6e6e"></div>
<svg style="left:546px;top:588px" width="7" height="13" viewBox="0 0 7 13"><path d="M1 4.3l2.5-2.5L6 4.3M1 8.7l2.5 2.5L6 8.7" fill="none" stroke="#4a4a4a" stroke-width="1.25"/></svg>
<span class="tr10" style="letter-spacing:0.47px;right:843.83px;text-align:right;top:588px">0.839394</span>
<span class="tr10" style="transform:scaleX(0.914);transform-origin:0 0;left:561.5px;top:590px">V</span>
<div style="left:586px;top:586px;width:60px;height:20px;border:1px solid #c9bcae;background:#fff;box-sizing:border-box"></div>
<span class="tr" style="letter-spacing:-0.06px;left:590.5px;top:588px">0x021A</span>
<div style="left:173px;top:609px;width:478px;height:27px;background:#efefef"></div>
<div style="left:173px;top:635px;width:478px;height:1px;background:repeating-linear-gradient(90deg,transparent 0,transparent 1px,#bcbcbc 1px,#bcbcbc 3px,transparent 3px,transparent 5px)"></div>
<div style="left:428px;top:614px;width:1px;height:17px;background:#c9c9c9"></div>
<div style="left:472px;top:614px;width:1px;height:17px;background:#c9c9c9"></div>
<div style="left:578px;top:614px;width:1px;height:17px;background:#c9c9c9"></div>
<span class="tb" style="letter-spacing:0.17px;left:178.5px;top:615px">VOUT_MARGIN_LOW</span>
<span class="tr" style="letter-spacing:0.05px;left:435.5px;top:615px">0x26</span>
<div style="left:479px;top:612px;width:80px;height:19px;border:1px solid #c9bcae;background:#fff;box-sizing:border-box"></div>
<div style="left:542px;top:614px;width:15px;height:15px;border:1px solid #6e6e6e;border-radius:2.5px;background:linear-gradient(#f8f8f8,#ebebeb);box-sizing:border-box"></div>
<div style="left:543px;top:621px;width:13px;height:1px;background:#6e6e6e"></div>
<svg style="left:546px;top:615px" width="7" height="13" viewBox="0 0 7 13"><path d="M1 4.3l2.5-2.5L6 4.3M1 8.7l2.5 2.5L6 8.7" fill="none" stroke="#4a4a4a" stroke-width="1.25"/></svg>
<span class="tr10" style="letter-spacing:0.47px;right:843.83px;text-align:right;top:615px">0.758263</span>
<span class="tr10" style="transform:scaleX(0.914);transform-origin:0 0;left:561.5px;top:617px">V</span>
<div style="left:586px;top:613px;width:60px;height:20px;border:1px solid #c9bcae;background:#fff;box-sizing:border-box"></div>
<span class="tr" style="letter-spacing:-0.26px;left:590.5px;top:615px">0x01E6</span>
<div style="left:173px;top:636px;width:478px;height:27px;background:#e8e8e8"></div>
<div style="left:173px;top:662px;width:478px;height:1px;background:repeating-linear-gradient(90deg,transparent 0,transparent 1px,#bcbcbc 1px,#bcbcbc 3px,transparent 3px,transparent 5px)"></div>
<div style="left:428px;top:641px;width:1px;height:17px;background:#c9c9c9"></div>
<div style="left:472px;top:641px;width:1px;height:17px;background:#c9c9c9"></div>
<div style="left:578px;top:641px;width:1px;height:17px;background:#c9c9c9"></div>
<span class="tb" style="letter-spacing:0.2px;left:178.5px;top:642px">VOUT_TRANSITION_RATE</span>
<span class="tr" style="letter-spacing:0.05px;left:435.5px;top:642px">0x27</span>
<div style="left:479px;top:639px;width:80px;height:19px;border:1px solid #c9bcae;background:#fff;box-sizing:border-box"></div>
<div style="left:542px;top:641px;width:15px;height:15px;border:1px solid #6e6e6e;border-radius:2.5px;background:linear-gradient(#f8f8f8,#ebebeb);box-sizing:border-box"></div>
<div style="left:543px;top:648px;width:13px;height:1px;background:#6e6e6e"></div>
<svg style="left:546px;top:642px" width="7" height="13" viewBox="0 0 7 13"><path d="M1 4.3l2.5-2.5L6 4.3M1 8.7l2.5 2.5L6 8.7" fill="none" stroke="#4a4a4a" stroke-width="1.25"/></svg>
<span class="tr10" style="letter-spacing:0.48px;right:843.82px;text-align:right;top:642px">1.0000</span>
<span class="tr8" style="letter-spacing:1.5px;left:561.5px;top:637px">mV</span>
<div style="left:562px;top:648px;width:13px;height:1px;background:#222"></div>
<span class="tr9i" style="letter-spacing:1.31px;left:563px;top:646px">µs</span>
<div style="left:586px;top:640px;width:60px;height:20px;border:1px solid #c9bcae;background:#fff;box-sizing:border-box"></div>
<span class="tr" style="letter-spacing:-0.26px;left:590.5px;top:642px">0xE010</span>
<div style="left:173px;top:663px;width:478px;height:27px;background:#efefef"></div>
<div style="left:173px;top:689px;width:478px;height:1px;background:repeating-linear-gradient(90deg,transparent 0,transparent 1px,#bcbcbc 1px,#bcbcbc 3px,transparent 3px,transparent 5px)"></div>
<div style="left:428px;top:668px;width:1px;height:17px;background:#c9c9c9"></div>
<div style="left:472px;top:668px;width:1px;height:17px;background:#c9c9c9"></div>
<div style="left:578px;top:668px;width:1px;height:17px;background:#c9c9c9"></div>
<span class="tb" style="letter-spacing:0.38px;left:178.5px;top:669px">VOUT_MIN</span>
<span class="tr" style="letter-spacing:-0.36px;left:435.5px;top:669px">0x2B</span>
<div style="left:479px;top:666px;width:80px;height:19px;border:1px solid #c9bcae;background:#fff;box-sizing:border-box"></div>
<div style="left:542px;top:668px;width:15px;height:15px;border:1px solid #6e6e6e;border-radius:2.5px;background:linear-gradient(#f8f8f8,#ebebeb);box-sizing:border-box"></div>
<div style="left:543px;top:675px;width:13px;height:1px;background:#6e6e6e"></div>
<svg style="left:546px;top:669px" width="7" height="13" viewBox="0 0 7 13"><path d="M1 4.3l2.5-2.5L6 4.3M1 8.7l2.5 2.5L6 8.7" fill="none" stroke="#4a4a4a" stroke-width="1.25"/></svg>
<span class="tr10" style="letter-spacing:0.47px;right:843.83px;text-align:right;top:669px">0.500000</span>
<span class="tr10" style="transform:scaleX(0.914);transform-origin:0 0;left:561.5px;top:671px">V</span>
<div style="left:586px;top:667px;width:60px;height:20px;border:1px solid #c9bcae;background:#fff;box-sizing:border-box"></div>
<span class="tr" style="letter-spacing:-0.02px;left:590.5px;top:669px">0x0100</span>
<div style="left:173px;top:690px;width:478px;height:27px;background:#e8e8e8"></div>
<div style="left:173px;top:716px;width:478px;height:1px;background:repeating-linear-gradient(90deg,transparent 0,transparent 1px,#bcbcbc 1px,#bcbcbc 3px,transparent 3px,transparent 5px)"></div>
<div style="left:428px;top:695px;width:1px;height:17px;background:#c9c9c9"></div>
<div style="left:472px;top:695px;width:1px;height:17px;background:#c9c9c9"></div>
<div style="left:578px;top:695px;width:1px;height:17px;background:#c9c9c9"></div>
<span class="tb" style="letter-spacing:-0.2px;left:178.5px;top:696px">FREQUENCY_SWITCH</span>
<span class="tr" style="letter-spacing:0.05px;left:435.5px;top:696px">0x33</span>
<div style="left:479px;top:693px;width:80px;height:19px;border:1px solid #c9bcae;background:#fff;box-sizing:border-box"></div>
<div style="left:542px;top:695px;width:15px;height:15px;border:1px solid #6e6e6e;border-radius:2.5px;background:linear-gradient(#f8f8f8,#ebebeb);box-sizing:border-box"></div>
<svg style="left:545px;top:699px" width="9" height="7" viewBox="0 0 9 7"><path d="M0.9 1.1l3.6 4.1 3.6-4.1" fill="none" stroke="#505050" stroke-width="1.05"/></svg>
<span class="tr10" style="letter-spacing:0.66px;right:843.64px;text-align:right;top:696px">550</span>
<span class="tr10" style="letter-spacing:-0.12px;left:561.5px;top:698px">kHz</span>
<div style="left:586px;top:694px;width:60px;height:20px;border:1px solid #c9bcae;background:#fff;box-sizing:border-box"></div>
<span class="tr" style="letter-spacing:-0.02px;left:590.5px;top:696px">0x0226</span>
<div style="left:173px;top:717px;width:478px;height:27px;background:#efefef"></div>
<div style="left:173px;top:743px;width:478px;height:1px;background:repeating-linear-gradient(90deg,transparent 0,transparent 1px,#bcbcbc 1px,#bcbcbc 3px,transparent 3px,transparent 5px)"></div>
<div style="left:428px;top:722px;width:1px;height:17px;background:#c9c9c9"></div>
<div style="left:472px;top:722px;width:1px;height:17px;background:#c9c9c9"></div>
<div style="left:578px;top:722px;width:1px;height:17px;background:#c9c9c9"></div>
<span class="tb" style="letter-spacing:-0.26px;left:178.5px;top:723px">INTERLEAVE</span>
<span class="tr" style="letter-spacing:0.05px;left:435.5px;top:723px">0x37</span>
<div style="left:479px;top:720px;width:80px;height:20px;border:1px solid #c9bcae;background:#fff;box-sizing:border-box"></div>
<div style="left:542px;top:722px;width:15px;height:16px;border:1px solid #6e6e6e;border-radius:2.5px;background:linear-gradient(#f8f8f8,#ebebeb);box-sizing:border-box"></div>
<svg style="left:545px;top:726.5px" width="9" height="7" viewBox="0 0 9 7"><path d="M0.9 1.1l3.6 4.1 3.6-4.1" fill="none" stroke="#505050" stroke-width="1.05"/></svg>
<span class="tr" style="letter-spacing:-0.23px;left:484px;top:723px">Group ID</span>
<span class="tb" style="letter-spacing:0.91px;left:528px;top:723px">...</span>
<div style="left:586px;top:721px;width:60px;height:20px;border:1px solid #c9bcae;background:#fff;box-sizing:border-box"></div>
<span class="tr" style="letter-spacing:-0.02px;left:590.5px;top:723px">0x0020</span>
<div style="left:173px;top:744px;width:478px;height:27px;background:#e8e8e8"></div>
<div style="left:173px;top:770px;width:478px;height:1px;background:repeating-linear-gradient(90deg,transparent 0,transparent 1px,#bcbcbc 1px,#bcbcbc 3px,transparent 3px,transparent 5px)"></div>
<div style="left:428px;top:749px;width:1px;height:17px;background:#c9c9c9"></div>
<div style="left:472px;top:749px;width:1px;height:17px;background:#c9c9c9"></div>
<div style="left:578px;top:749px;width:1px;height:17px;background:#c9c9c9"></div>
<span class="tb" style="letter-spacing:0.25px;left:178.5px;top:750px">IC_DEVICE_ID</span>
<span class="tr" style="letter-spacing:-0.3px;left:435.5px;top:750px">0xAD</span>
<div style="left:479px;top:747px;width:80px;height:20px;border:1px solid #c9bcae;background:#fff;box-sizing:border-box"></div>
<div style="left:542px;top:749px;width:15px;height:16px;border:1px solid #6e6e6e;border-radius:2.5px;background:linear-gradient(#f8f8f8,#ebebeb);box-sizing:border-box"></div>
<svg style="left:545px;top:753.5px" width="9" height="7" viewBox="0 0 9 7"><path d="M0.9 1.1l3.6 4.1 3.6-4.1" fill="none" stroke="#505050" stroke-width="1.05"/></svg>
<span class="tr" style="letter-spacing:0.05px;left:484.5px;top:750px">0x54495</span>
<span class="tb" style="letter-spacing:0.91px;left:528px;top:750px">...</span>
<div style="left:586px;top:748px;width:60px;height:20px;border:1px solid #c9bcae;background:#fff;box-sizing:border-box"></div>
<span class="tr" style="letter-spacing:0.05px;left:589.8px;top:751px">0x54</span>
<span class="tb" style="letter-spacing:0.91px;left:614.8px;top:751px">...</span>
<div style="left:629px;top:750px;width:15px;height:16px;border:1px solid #6e6e6e;border-radius:2.5px;background:linear-gradient(#f8f8f8,#ebebeb);box-sizing:border-box"></div>
<svg style="left:632px;top:754.5px" width="9" height="7" viewBox="0 0 9 7"><path d="M0.9 1.1l3.6 4.1 3.6-4.1" fill="none" stroke="#505050" stroke-width="1.05"/></svg>
<div style="left:173px;top:771px;width:478px;height:27px;background:#efefef"></div>
<div style="left:173px;top:797px;width:478px;height:1px;background:repeating-linear-gradient(90deg,transparent 0,transparent 1px,#bcbcbc 1px,#bcbcbc 3px,transparent 3px,transparent 5px)"></div>
<div style="left:428px;top:776px;width:1px;height:17px;background:#c9c9c9"></div>
<div style="left:472px;top:776px;width:1px;height:17px;background:#c9c9c9"></div>
<div style="left:578px;top:776px;width:1px;height:17px;background:#c9c9c9"></div>
<span class="tb" style="letter-spacing:-0.07px;left:178.5px;top:777px">IC_DEVICE_REV</span>
<span class="tr" style="letter-spacing:-0.43px;left:435.5px;top:777px">0xAE</span>
<div style="left:479px;top:774px;width:80px;height:20px;border:1px solid #c9bcae;background:#fff;box-sizing:border-box"></div>
<div style="left:542px;top:776px;width:15px;height:16px;border:1px solid #6e6e6e;border-radius:2.5px;background:linear-gradient(#f8f8f8,#ebebeb);box-sizing:border-box"></div>
<svg style="left:545px;top:780.5px" width="9" height="7" viewBox="0 0 9 7"><path d="M0.9 1.1l3.6 4.1 3.6-4.1" fill="none" stroke="#505050" stroke-width="1.05"/></svg>
<span class="tr" style="letter-spacing:-0.02px;right:843.52px;text-align:right;top:777px">0x4000</span>
<div style="left:586px;top:775px;width:60px;height:20px;border:1px solid #c9bcae;background:#fff;box-sizing:border-box"></div>
<span class="tr" style="letter-spacing:-0.02px;left:589.8px;top:778px">0x4000</span>
<div style="left:629px;top:777px;width:15px;height:16px;border:1px solid #6e6e6e;border-radius:2.5px;background:linear-gradient(#f8f8f8,#ebebeb);box-sizing:border-box"></div>
<svg style="left:632px;top:781.5px" width="9" height="7" viewBox="0 0 9 7"><path d="M0.9 1.1l3.6 4.1 3.6-4.1" fill="none" stroke="#505050" stroke-width="1.05"/></svg>
<div style="left:173px;top:798px;width:478px;height:27px;background:#e8e8e8"></div>
<div style="left:173px;top:824px;width:478px;height:1px;background:repeating-linear-gradient(90deg,transparent 0,transparent 1px,#bcbcbc 1px,#bcbcbc 3px,transparent 3px,transparent 5px)"></div>
<div style="left:428px;top:803px;width:1px;height:17px;background:#c9c9c9"></div>
<div style="left:472px;top:803px;width:1px;height:17px;background:#c9c9c9"></div>
<div style="left:578px;top:803px;width:1px;height:17px;background:#c9c9c9"></div>
<span class="tb" style="letter-spacing:0.04px;left:178.5px;top:804px">TELEMETRY_CONFIG [MFR 00]</span>
<span class="tr" style="letter-spacing:-0.23px;left:435.5px;top:804px">0xD0</span>
<div style="left:479px;top:801px;width:80px;height:20px;border:1px solid #c9bcae;background:#fff;box-sizing:border-box"></div>
<div style="left:542px;top:803px;width:15px;height:16px;border:1px solid #6e6e6e;border-radius:2.5px;background:linear-gradient(#f8f8f8,#ebebeb);box-sizing:border-box"></div>
<svg style="left:545px;top:807.5px" width="9" height="7" viewBox="0 0 9 7"><path d="M0.9 1.1l3.6 4.1 3.6-4.1" fill="none" stroke="#505050" stroke-width="1.05"/></svg>
<span class="tr" style="letter-spacing:-0.35px;left:483px;top:804px">VOUT: Pr</span>
<span class="tb" style="letter-spacing:0.91px;left:528px;top:804px">...</span>
<div style="left:586px;top:802px;width:60px;height:20px;border:1px solid #c9bcae;background:#fff;box-sizing:border-box"></div>
<span class="tr" style="letter-spacing:0.05px;left:589.8px;top:805px">0x03</span>
<span class="tb" style="letter-spacing:0.91px;left:614.8px;top:805px">...</span>
<div style="left:629px;top:804px;width:15px;height:16px;border:1px solid #6e6e6e;border-radius:2.5px;background:linear-gradient(#f8f8f8,#ebebeb);box-sizing:border-box"></div>
<svg style="left:632px;top:808.5px" width="9" height="7" viewBox="0 0 9 7"><path d="M0.9 1.1l3.6 4.1 3.6-4.1" fill="none" stroke="#505050" stroke-width="1.05"/></svg>
<div style="left:173px;top:825px;width:478px;height:27px;background:#efefef"></div>
<div style="left:173px;top:851px;width:478px;height:1px;background:repeating-linear-gradient(90deg,transparent 0,transparent 1px,#bcbcbc 1px,#bcbcbc 3px,transparent 3px,transparent 5px)"></div>
<div style="left:428px;top:830px;width:1px;height:17px;background:#c9c9c9"></div>
<div style="left:472px;top:830px;width:1px;height:17px;background:#c9c9c9"></div>
<div style="left:578px;top:830px;width:1px;height:17px;background:#c9c9c9"></div>
<span class="tb" style="letter-spacing:0.11px;left:178.5px;top:831px">PGOOD_CONFIG [MFR 19]</span>
<span class="tr" style="letter-spacing:-0.36px;left:435.5px;top:831px">0xE3</span>
<div style="left:479px;top:828px;width:80px;height:20px;border:1px solid #c9bcae;background:#fff;box-sizing:border-box"></div>
<div style="left:542px;top:830px;width:15px;height:16px;border:1px solid #6e6e6e;border-radius:2.5px;background:linear-gradient(#f8f8f8,#ebebeb);box-sizing:border-box"></div>
<svg style="left:545px;top:834.5px" width="9" height="7" viewBox="0 0 9 7"><path d="M0.9 1.1l3.6 4.1 3.6-4.1" fill="none" stroke="#505050" stroke-width="1.05"/></svg>
<span class="tr" style="letter-spacing:-0.64px;left:485px;top:831px">PGood O</span>
<span class="tb" style="letter-spacing:0.91px;left:528px;top:831px">...</span>
<div style="left:586px;top:829px;width:60px;height:20px;border:1px solid #c9bcae;background:#fff;box-sizing:border-box"></div>
<span class="tr" style="letter-spacing:-0.14px;left:590.5px;top:831px">0x009F</span>
<div style="left:173px;top:852px;width:478px;height:27px;background:#e8e8e8"></div>
<div style="left:173px;top:878px;width:478px;height:1px;background:repeating-linear-gradient(90deg,transparent 0,transparent 1px,#bcbcbc 1px,#bcbcbc 3px,transparent 3px,transparent 5px)"></div>
<div style="left:428px;top:857px;width:1px;height:17px;background:#c9c9c9"></div>
<div style="left:472px;top:857px;width:1px;height:17px;background:#c9c9c9"></div>
<div style="left:578px;top:857px;width:1px;height:17px;background:#c9c9c9"></div>
<div style="left:662px;top:103px;width:480px;height:760px;border:1px solid #6b6b6b;border-radius:6px 6px 0 0;background:#fff;box-sizing:border-box"></div>
<div style="left:663px;top:104px;width:478px;height:26px;background:linear-gradient(#c3d9ee 0,#c3d9ee 50%,#ccdcea 100%);border-radius:5px 5px 0 0;border:1px solid #fff;border-bottom:none;box-sizing:border-box"></div>
<div style="left:663px;top:130px;width:478px;height:1px;background:#6b6b6b"></div>
<span class="tb" style="letter-spacing:0.65px;left:670px;top:110px">Command</span>
<span class="tb" style="letter-spacing:0.17px;left:925px;top:110px">Code</span>
<span class="tb" style="letter-spacing:0.6px;left:970.5px;top:110px">Value/Edit</span>
<span class="tb" style="letter-spacing:0.71px;left:1075px;top:110px">Hex/Edit</span>
<div style="left:918px;top:108px;width:1px;height:17px;background:#8d99a6"></div>
<div style="left:962px;top:108px;width:1px;height:17px;background:#8d99a6"></div>
<div style="left:1068px;top:108px;width:1px;height:17px;background:#8d99a6"></div>
<div style="left:663px;top:131px;width:478px;height:23px;background:#fff"></div>
<div style="left:664px;top:132px;width:476px;height:20px;background:linear-gradient(#646464,#6e6e6e)"></div>
<div style="left:663px;top:153px;width:478px;height:1px;background:#6b6b6b"></div>
<svg style="left:672px;top:138px" width="9" height="8" viewBox="0 0 9 8"><path d="M0 0h9L4.5 8z" fill="#fff"/></svg>
<span class="tb" style="letter-spacing:0.63px;left:689px;top:135px;color:#fff">Manufacturer Info</span>
<div style="left:663px;top:154px;width:478px;height:27px;background:#e8e8e8"></div>
<div style="left:663px;top:180px;width:478px;height:1px;background:repeating-linear-gradient(90deg,transparent 0,transparent 1px,#bcbcbc 1px,#bcbcbc 3px,transparent 3px,transparent 5px)"></div>
<div style="left:918px;top:159px;width:1px;height:17px;background:#c9c9c9"></div>
<div style="left:962px;top:159px;width:1px;height:17px;background:#c9c9c9"></div>
<div style="left:1068px;top:159px;width:1px;height:17px;background:#c9c9c9"></div>
<span class="tb" style="letter-spacing:0.2px;left:668.5px;top:160px">CAPABILITY</span>
<span class="tr" style="letter-spacing:0.05px;left:925.5px;top:160px">0x19</span>
<div style="left:969px;top:157px;width:80px;height:20px;border:1px solid #c9bcae;background:#fff;box-sizing:border-box"></div>
<div style="left:1032px;top:159px;width:15px;height:16px;border:1px solid #6e6e6e;border-radius:2.5px;background:linear-gradient(#f8f8f8,#ebebeb);box-sizing:border-box"></div>
<svg style="left:1035px;top:163.5px" width="9" height="7" viewBox="0 0 9 7"><path d="M0.9 1.1l3.6 4.1 3.6-4.1" fill="none" stroke="#505050" stroke-width="1.05"/></svg>
<span class="tr" style="letter-spacing:-0.23px;right:353.73px;text-align:right;top:160px">0xD0</span>
<span class="tr" style="letter-spacing:-0.23px;left:1078.7px;top:161px">0xD0</span>
<div style="left:663px;top:181px;width:478px;height:27px;background:#efefef"></div>
<div style="left:663px;top:207px;width:478px;height:1px;background:repeating-linear-gradient(90deg,transparent 0,transparent 1px,#bcbcbc 1px,#bcbcbc 3px,transparent 3px,transparent 5px)"></div>
<div style="left:918px;top:186px;width:1px;height:17px;background:#c9c9c9"></div>
<div style="left:962px;top:186px;width:1px;height:17px;background:#c9c9c9"></div>
<div style="left:1068px;top:186px;width:1px;height:17px;background:#c9c9c9"></div>
<span class="tb" style="letter-spacing:0.08px;left:668.5px;top:187px">PMBUS_REVISION</span>
<span class="tr" style="letter-spacing:0.05px;left:925.5px;top:187px">0x98</span>
<div style="left:969px;top:184px;width:80px;height:20px;border:1px solid #c9bcae;background:#fff;box-sizing:border-box"></div>
<div style="left:1032px;top:186px;width:15px;height:16px;border:1px solid #6e6e6e;border-radius:2.5px;background:linear-gradient(#f8f8f8,#ebebeb);box-sizing:border-box"></div>
<svg style="left:1035px;top:190.5px" width="9" height="7" viewBox="0 0 9 7"><path d="M0.9 1.1l3.6 4.1 3.6-4.1" fill="none" stroke="#505050" stroke-width="1.05"/></svg>
<span class="tr" style="letter-spacing:0.05px;right:353.45px;text-align:right;top:187px">0x33</span>
<span class="tr" style="letter-spacing:0.05px;left:1078.7px;top:188px">0x33</span>
<div style="left:663px;top:208px;width:478px;height:27px;background:#e8e8e8"></div>
<div style="left:663px;top:234px;width:478px;height:1px;background:repeating-linear-gradient(90deg,transparent 0,transparent 1px,#bcbcbc 1px,#bcbcbc 3px,transparent 3px,transparent 5px)"></div>
<div style="left:918px;top:213px;width:1px;height:17px;background:#c9c9c9"></div>
<div style="left:962px;top:213px;width:1px;height:17px;background:#c9c9c9"></div>
<div style="left:1068px;top:213px;width:1px;height:17px;background:#c9c9c9"></div>
<span class="tb" style="letter-spacing:0.61px;left:668.5px;top:214px">MFR_ID</span>
<span class="tr" style="letter-spacing:0.05px;left:925.5px;top:214px">0x99</span>
<div style="left:969px;top:211px;width:80px;height:20px;border:1px solid #c9bcae;background:#fff;box-sizing:border-box"></div>
<div style="left:1076px;top:212px;width:60px;height:20px;border:1px solid #c9bcae;background:#fff;box-sizing:border-box"></div>
<span class="tr" style="letter-spacing:0.05px;left:1079.8px;top:215px">0x00</span>
<span class="tb" style="letter-spacing:0.91px;left:1104.8px;top:215px">...</span>
<div style="left:1119px;top:214px;width:15px;height:16px;border:1px solid #6e6e6e;border-radius:2.5px;background:linear-gradient(#f8f8f8,#ebebeb);box-sizing:border-box"></div>
<svg style="left:1122px;top:218.5px" width="9" height="7" viewBox="0 0 9 7"><path d="M0.9 1.1l3.6 4.1 3.6-4.1" fill="none" stroke="#505050" stroke-width="1.05"/></svg>
<div style="left:663px;top:235px;width:478px;height:27px;background:#efefef"></div>
<div style="left:663px;top:261px;width:478px;height:1px;background:repeating-linear-gradient(90deg,transparent 0,transparent 1px,#bcbcbc 1px,#bcbcbc 3px,transparent 3px,transparent 5px)"></div>
<div style="left:918px;top:240px;width:1px;height:17px;background:#c9c9c9"></div>
<div style="left:962px;top:240px;width:1px;height:17px;background:#c9c9c9"></div>
<div style="left:1068px;top:240px;width:1px;height:17px;background:#c9c9c9"></div>
<span class="tb" style="letter-spacing:-0.08px;left:668.5px;top:241px">MFR_MODEL</span>
<span class="tr" style="letter-spacing:-0.03px;left:925.5px;top:241px">0x9A</span>
<div style="left:969px;top:238px;width:80px;height:20px;border:1px solid #c9bcae;background:#fff;box-sizing:border-box"></div>
<div style="left:1076px;top:239px;width:60px;height:20px;border:1px solid #c9bcae;background:#fff;box-sizing:border-box"></div>
<span class="tr" style="letter-spacing:0.05px;left:1079.8px;top:242px">0x00</span>
<span class="tb" style="letter-spacing:0.91px;left:1104.8px;top:242px">...</span>
<div style="left:1119px;top:241px;width:15px;height:16px;border:1px solid #6e6e6e;border-radius:2.5px;background:linear-gradient(#f8f8f8,#ebebeb);box-sizing:border-box"></div>
<svg style="left:1122px;top:245.5px" width="9" height="7" viewBox="0 0 9 7"><path d="M0.9 1.1l3.6 4.1 3.6-4.1" fill="none" stroke="#505050" stroke-width="1.05"/></svg>
<div style="left:663px;top:262px;width:478px;height:27px;background:#e8e8e8"></div>
<div style="left:663px;top:288px;width:478px;height:1px;background:repeating-linear-gradient(90deg,transparent 0,transparent 1px,#bcbcbc 1px,#bcbcbc 3px,transparent 3px,transparent 5px)"></div>
<div style="left:918px;top:267px;width:1px;height:17px;background:#c9c9c9"></div>
<div style="left:962px;top:267px;width:1px;height:17px;background:#c9c9c9"></div>
<div style="left:1068px;top:267px;width:1px;height:17px;background:#c9c9c9"></div>
<span class="tb" style="letter-spacing:0.18px;left:668.5px;top:268px">MFR_REVISION</span>
<span class="tr" style="letter-spacing:-0.36px;left:925.5px;top:268px">0x9B</span>
<div style="left:969px;top:265px;width:80px;height:20px;border:1px solid #c9bcae;background:#fff;box-sizing:border-box"></div>
<div style="left:1076px;top:266px;width:60px;height:20px;border:1px solid #c9bcae;background:#fff;box-sizing:border-box"></div>
<span class="tr" style="letter-spacing:0.05px;left:1079.8px;top:269px">0x00</span>
<span class="tb" style="letter-spacing:0.91px;left:1104.8px;top:269px">...</span>
<div style="left:1119px;top:268px;width:15px;height:16px;border:1px solid #6e6e6e;border-radius:2.5px;background:linear-gradient(#f8f8f8,#ebebeb);box-sizing:border-box"></div>
<svg style="left:1122px;top:272.5px" width="9" height="7" viewBox="0 0 9 7"><path d="M0.9 1.1l3.6 4.1 3.6-4.1" fill="none" stroke="#505050" stroke-width="1.05"/></svg>
<div style="left:663px;top:289px;width:478px;height:27px;background:#efefef"></div>
<div style="left:663px;top:315px;width:478px;height:1px;background:#6b6b6b"></div>
<div style="left:918px;top:294px;width:1px;height:17px;background:#c9c9c9"></div>
<div style="left:962px;top:294px;width:1px;height:17px;background:#c9c9c9"></div>
<div style="left:1068px;top:294px;width:1px;height:17px;background:#c9c9c9"></div>
<span class="tb" style="letter-spacing:0.08px;left:668.5px;top:295px">MFR_SERIAL</span>
<span class="tr" style="letter-spacing:-0.36px;left:925.5px;top:295px">0x9E</span>
<div style="left:969px;top:292px;width:80px;height:20px;border:1px solid #c9bcae;background:#fff;box-sizing:border-box"></div>
<div style="left:1076px;top:293px;width:60px;height:20px;border:1px solid #c9bcae;background:#fff;box-sizing:border-box"></div>
<span class="tr" style="letter-spacing:0.05px;left:1079.8px;top:296px">0x00</span>
<span class="tb" style="letter-spacing:0.91px;left:1104.8px;top:296px">...</span>
<div style="left:1119px;top:295px;width:15px;height:16px;border:1px solid #6e6e6e;border-radius:2.5px;background:linear-gradient(#f8f8f8,#ebebeb);box-sizing:border-box"></div>
<svg style="left:1122px;top:299.5px" width="9" height="7" viewBox="0 0 9 7"><path d="M0.9 1.1l3.6 4.1 3.6-4.1" fill="none" stroke="#505050" stroke-width="1.05"/></svg>
<div style="left:663px;top:316px;width:478px;height:23px;background:#fff"></div>
<div style="left:664px;top:317px;width:476px;height:20px;background:linear-gradient(#646464,#6e6e6e)"></div>
<div style="left:663px;top:338px;width:478px;height:1px;background:#6b6b6b"></div>
<svg style="left:672px;top:323px" width="9" height="8" viewBox="0 0 9 8"><path d="M0 0h9L4.5 8z" fill="#fff"/></svg>
<span class="tb" style="letter-spacing:0.48px;left:689px;top:320px;color:#fff">On/Off Configuration</span>
<div style="left:663px;top:339px;width:478px;height:27px;background:#e8e8e8"></div>
<div style="left:663px;top:365px;width:478px;height:1px;background:repeating-linear-gradient(90deg,transparent 0,transparent 1px,#bcbcbc 1px,#bcbcbc 3px,transparent 3px,transparent 5px)"></div>
<div style="left:918px;top:344px;width:1px;height:17px;background:#c9c9c9"></div>
<div style="left:962px;top:344px;width:1px;height:17px;background:#c9c9c9"></div>
<div style="left:1068px;top:344px;width:1px;height:17px;background:#c9c9c9"></div>
<span class="tb" style="letter-spacing:-0.01px;left:668.5px;top:345px">OPERATION</span>
<span class="tr" style="letter-spacing:0.05px;left:925.5px;top:345px">0x01</span>
<div style="left:969px;top:342px;width:80px;height:20px;border:1px solid #c9bcae;background:#fff;box-sizing:border-box"></div>
<div style="left:1032px;top:344px;width:15px;height:16px;border:1px solid #6e6e6e;border-radius:2.5px;background:linear-gradient(#f8f8f8,#ebebeb);box-sizing:border-box"></div>
<svg style="left:1035px;top:348.5px" width="9" height="7" viewBox="0 0 9 7"><path d="M0.9 1.1l3.6 4.1 3.6-4.1" fill="none" stroke="#505050" stroke-width="1.05"/></svg>
<span class="tr" style="letter-spacing:0.05px;right:353.45px;text-align:right;top:345px">0x84</span>
<div style="left:1076px;top:343px;width:60px;height:20px;border:1px solid #c9bcae;background:#fff;box-sizing:border-box"></div>
<span class="tr" style="letter-spacing:0.05px;left:1080.5px;top:345px">0x84</span>
<div style="left:663px;top:366px;width:478px;height:27px;background:#efefef"></div>
<div style="left:663px;top:392px;width:478px;height:1px;background:repeating-linear-gradient(90deg,transparent 0,transparent 1px,#bcbcbc 1px,#bcbcbc 3px,transparent 3px,transparent 5px)"></div>
<div style="left:918px;top:371px;width:1px;height:17px;background:#c9c9c9"></div>
<div style="left:962px;top:371px;width:1px;height:17px;background:#c9c9c9"></div>
<div style="left:1068px;top:371px;width:1px;height:17px;background:#c9c9c9"></div>
<span class="tb" style="letter-spacing:-0.21px;left:668.5px;top:372px">ON_OFF_CONFIG</span>
<span class="tb" style="letter-spacing:0.15px;left:765px;top:372px">phase ALL</span>
<span class="tr" style="letter-spacing:0.05px;left:925.5px;top:372px">0x02</span>
<div style="left:969px;top:369px;width:80px;height:20px;border:1px solid #c9bcae;background:#fff;box-sizing:border-box"></div>
<div style="left:1032px;top:371px;width:15px;height:16px;border:1px solid #6e6e6e;border-radius:2.5px;background:linear-gradient(#f8f8f8,#ebebeb);box-sizing:border-box"></div>
<svg style="left:1035px;top:375.5px" width="9" height="7" viewBox="0 0 9 7"><path d="M0.9 1.1l3.6 4.1 3.6-4.1" fill="none" stroke="#505050" stroke-width="1.05"/></svg>
<span class="tr" style="letter-spacing:-0.36px;right:353.86px;text-align:right;top:372px">0x1B</span>
<div style="left:1076px;top:370px;width:60px;height:20px;border:1px solid #c9bcae;background:#fff;box-sizing:border-box"></div>
<span class="tr" style="letter-spacing:-0.36px;left:1080.5px;top:372px">0x1B</span>
<div style="left:663px;top:393px;width:478px;height:27px;background:#e8e8e8"></div>
<div style="left:663px;top:419px;width:478px;height:1px;background:repeating-linear-gradient(90deg,transparent 0,transparent 1px,#bcbcbc 1px,#bcbcbc 3px,transparent 3px,transparent 5px)"></div>
<div style="left:918px;top:398px;width:1px;height:17px;background:#c9c9c9"></div>
<div style="left:962px;top:398px;width:1px;height:17px;background:#c9c9c9"></div>
<div style="left:1068px;top:398px;width:1px;height:17px;background:#c9c9c9"></div>
<span class="tb" style="letter-spacing:-0.12px;left:668.5px;top:399px">TON_DELAY</span>
<span class="tr" style="letter-spacing:0.05px;left:925.5px;top:399px">0x60</span>
<div style="left:969px;top:396px;width:80px;height:19px;border:1px solid #c9bcae;background:#fff;box-sizing:border-box"></div>
<div style="left:1032px;top:398px;width:15px;height:15px;border:1px solid #6e6e6e;border-radius:2.5px;background:linear-gradient(#f8f8f8,#ebebeb);box-sizing:border-box"></div>
<div style="left:1033px;top:405px;width:13px;height:1px;background:#6e6e6e"></div>
<svg style="left:1036px;top:399px" width="7" height="13" viewBox="0 0 7 13"><path d="M1 4.3l2.5-2.5L6 4.3M1 8.7l2.5 2.5L6 8.7" fill="none" stroke="#4a4a4a" stroke-width="1.25"/></svg>
<span class="tr10" style="letter-spacing:0.55px;right:353.75px;text-align:right;top:399px">0.0</span>
<span class="tr10" style="letter-spacing:-0.34px;left:1051.5px;top:401px">ms</span>
<div style="left:1076px;top:397px;width:60px;height:20px;border:1px solid #c9bcae;background:#fff;box-sizing:border-box"></div>
<span class="tr" style="letter-spacing:-0.14px;left:1080.5px;top:399px">0xF800</span>
<div style="left:663px;top:420px;width:478px;height:27px;background:#efefef"></div>
<div style="left:663px;top:446px;width:478px;height:1px;background:repeating-linear-gradient(90deg,transparent 0,transparent 1px,#bcbcbc 1px,#bcbcbc 3px,transparent 3px,transparent 5px)"></div>
<div style="left:918px;top:425px;width:1px;height:17px;background:#c9c9c9"></div>
<div style="left:962px;top:425px;width:1px;height:17px;background:#c9c9c9"></div>
<div style="left:1068px;top:425px;width:1px;height:17px;background:#c9c9c9"></div>
<span class="tb" style="letter-spacing:0.1px;left:668.5px;top:426px">TON_RISE</span>
<span class="tr" style="letter-spacing:0.05px;left:925.5px;top:426px">0x61</span>
<div style="left:969px;top:423px;width:80px;height:19px;border:1px solid #c9bcae;background:#fff;box-sizing:border-box"></div>
<div style="left:1032px;top:425px;width:15px;height:15px;border:1px solid #6e6e6e;border-radius:2.5px;background:linear-gradient(#f8f8f8,#ebebeb);box-sizing:border-box"></div>
<div style="left:1033px;top:432px;width:13px;height:1px;background:#6e6e6e"></div>
<svg style="left:1036px;top:426px" width="7" height="13" viewBox="0 0 7 13"><path d="M1 4.3l2.5-2.5L6 4.3M1 8.7l2.5 2.5L6 8.7" fill="none" stroke="#4a4a4a" stroke-width="1.25"/></svg>
<span class="tr10" style="letter-spacing:0.51px;right:353.79px;text-align:right;top:426px">3.00</span>
<span class="tr10" style="letter-spacing:-0.34px;left:1051.5px;top:428px">ms</span>
<div style="left:1076px;top:424px;width:60px;height:20px;border:1px solid #c9bcae;background:#fff;box-sizing:border-box"></div>
<span class="tr" style="letter-spacing:-0.31px;left:1080.5px;top:426px">0xF00C</span>
<div style="left:663px;top:447px;width:478px;height:27px;background:#e8e8e8"></div>
<div style="left:663px;top:473px;width:478px;height:1px;background:repeating-linear-gradient(90deg,transparent 0,transparent 1px,#bcbcbc 1px,#bcbcbc 3px,transparent 3px,transparent 5px)"></div>
<div style="left:918px;top:452px;width:1px;height:17px;background:#c9c9c9"></div>
<div style="left:962px;top:452px;width:1px;height:17px;background:#c9c9c9"></div>
<div style="left:1068px;top:452px;width:1px;height:17px;background:#c9c9c9"></div>
<span class="tb" style="letter-spacing:0.41px;left:668.5px;top:453px">TON_MAX_FAULT_LIMIT</span>
<span class="tr" style="letter-spacing:0.05px;left:925.5px;top:453px">0x62</span>
<div style="left:969px;top:450px;width:80px;height:19px;border:1px solid #c9bcae;background:#fff;box-sizing:border-box"></div>
<div style="left:1032px;top:452px;width:15px;height:15px;border:1px solid #6e6e6e;border-radius:2.5px;background:linear-gradient(#f8f8f8,#ebebeb);box-sizing:border-box"></div>
<svg style="left:1035px;top:456px" width="9" height="7" viewBox="0 0 9 7"><path d="M0.9 1.1l3.6 4.1 3.6-4.1" fill="none" stroke="#505050" stroke-width="1.05"/></svg>
<span class="tr10" style="transform:scaleX(1.079);transform-origin:0 0;right:354.30px;text-align:right;top:453px">0</span>
<span class="tr10" style="letter-spacing:-0.34px;left:1051.5px;top:455px">ms</span>
<div style="left:1076px;top:451px;width:60px;height:20px;border:1px solid #c9bcae;background:#fff;box-sizing:border-box"></div>
<span class="tr" style="letter-spacing:-0.14px;left:1080.5px;top:453px">0xF800</span>
<div style="left:663px;top:474px;width:478px;height:27px;background:#efefef"></div>
<div style="left:663px;top:500px;width:478px;height:1px;background:repeating-linear-gradient(90deg,transparent 0,transparent 1px,#bcbcbc 1px,#bcbcbc 3px,transparent 3px,transparent 5px)"></div>
<div style="left:918px;top:479px;width:1px;height:17px;background:#c9c9c9"></div>
<div style="left:962px;top:479px;width:1px;height:17px;background:#c9c9c9"></div>
<div style="left:1068px;top:479px;width:1px;height:17px;background:#c9c9c9"></div>
<span class="tb" style="letter-spacing:-0.08px;left:668.5px;top:480px">TON_MAX_FAULT_RESPONSE</span>
<span class="tr" style="letter-spacing:0.05px;left:925.5px;top:480px">0x63</span>
<div style="left:969px;top:477px;width:80px;height:20px;border:1px solid #c9bcae;background:#fff;box-sizing:border-box"></div>
<div style="left:1032px;top:479px;width:15px;height:16px;border:1px solid #6e6e6e;border-radius:2.5px;background:linear-gradient(#f8f8f8,#ebebeb);box-sizing:border-box"></div>
<svg style="left:1035px;top:483.5px" width="9" height="7" viewBox="0 0 9 7"><path d="M0.9 1.1l3.6 4.1 3.6-4.1" fill="none" stroke="#505050" stroke-width="1.05"/></svg>
<span class="tr" style="letter-spacing:-0.71px;left:996px;top:480px">Click</span>
<span class="tb" style="letter-spacing:0.91px;left:1018px;top:480px">...</span>
<div style="left:1076px;top:478px;width:60px;height:20px;border:1px solid #c9bcae;background:#fff;box-sizing:border-box"></div>
<span class="tr" style="letter-spacing:-0.36px;left:1080.5px;top:480px">0x3B</span>
<div style="left:663px;top:501px;width:478px;height:27px;background:#e8e8e8"></div>
<div style="left:663px;top:527px;width:478px;height:1px;background:repeating-linear-gradient(90deg,transparent 0,transparent 1px,#bcbcbc 1px,#bcbcbc 3px,transparent 3px,transparent 5px)"></div>
<div style="left:918px;top:506px;width:1px;height:17px;background:#c9c9c9"></div>
<div style="left:962px;top:506px;width:1px;height:17px;background:#c9c9c9"></div>
<div style="left:1068px;top:506px;width:1px;height:17px;background:#c9c9c9"></div>
<span class="tb" style="letter-spacing:-0.21px;left:668.5px;top:507px">TOFF_DELAY</span>
<span class="tr" style="letter-spacing:0.05px;left:925.5px;top:507px">0x64</span>
<div style="left:969px;top:504px;width:80px;height:19px;border:1px solid #c9bcae;background:#fff;box-sizing:border-box"></div>
<div style="left:1032px;top:506px;width:15px;height:15px;border:1px solid #6e6e6e;border-radius:2.5px;background:linear-gradient(#f8f8f8,#ebebeb);box-sizing:border-box"></div>
<div style="left:1033px;top:513px;width:13px;height:1px;background:#6e6e6e"></div>
<svg style="left:1036px;top:507px" width="7" height="13" viewBox="0 0 7 13"><path d="M1 4.3l2.5-2.5L6 4.3M1 8.7l2.5 2.5L6 8.7" fill="none" stroke="#4a4a4a" stroke-width="1.25"/></svg>
<span class="tr10" style="letter-spacing:0.55px;right:353.75px;text-align:right;top:507px">0.0</span>
<span class="tr10" style="letter-spacing:-0.34px;left:1051.5px;top:509px">ms</span>
<div style="left:1076px;top:505px;width:60px;height:20px;border:1px solid #c9bcae;background:#fff;box-sizing:border-box"></div>
<span class="tr" style="letter-spacing:-0.14px;left:1080.5px;top:507px">0xF800</span>
<div style="left:663px;top:528px;width:478px;height:27px;background:#efefef"></div>
<div style="left:663px;top:554px;width:478px;height:1px;background:#6b6b6b"></div>
<div style="left:918px;top:533px;width:1px;height:17px;background:#c9c9c9"></div>
<div style="left:962px;top:533px;width:1px;height:17px;background:#c9c9c9"></div>
<div style="left:1068px;top:533px;width:1px;height:17px;background:#c9c9c9"></div>
<span class="tb" style="letter-spacing:-0.27px;left:668.5px;top:534px">TOFF_FALL</span>
<span class="tr" style="letter-spacing:0.05px;left:925.5px;top:534px">0x65</span>
<div style="left:969px;top:531px;width:80px;height:19px;border:1px solid #c9bcae;background:#fff;box-sizing:border-box"></div>
<div style="left:1032px;top:533px;width:15px;height:15px;border:1px solid #6e6e6e;border-radius:2.5px;background:linear-gradient(#f8f8f8,#ebebeb);box-sizing:border-box"></div>
<div style="left:1033px;top:540px;width:13px;height:1px;background:#6e6e6e"></div>
<svg style="left:1036px;top:534px" width="7" height="13" viewBox="0 0 7 13"><path d="M1 4.3l2.5-2.5L6 4.3M1 8.7l2.5 2.5L6 8.7" fill="none" stroke="#4a4a4a" stroke-width="1.25"/></svg>
<span class="tr10" style="letter-spacing:0.51px;right:353.79px;text-align:right;top:534px">0.50</span>
<span class="tr10" style="letter-spacing:-0.34px;left:1051.5px;top:536px">ms</span>
<div style="left:1076px;top:532px;width:60px;height:20px;border:1px solid #c9bcae;background:#fff;box-sizing:border-box"></div>
<span class="tr" style="letter-spacing:-0.14px;left:1080.5px;top:534px">0xF002</span>
<div style="left:663px;top:555px;width:478px;height:23px;background:#fff"></div>
<div style="left:664px;top:556px;width:476px;height:20px;background:linear-gradient(#646464,#6e6e6e)"></div>
<div style="left:663px;top:577px;width:478px;height:1px;background:#6b6b6b"></div>
<svg style="left:672px;top:562px" width="9" height="8" viewBox="0 0 9 8"><path d="M0 0h9L4.5 8z" fill="#fff"/></svg>
<span class="tb" style="letter-spacing:0.68px;left:689px;top:559px;color:#fff">Status</span>
<div style="left:663px;top:578px;width:478px;height:27px;background:#e8e8e8"></div>
<div style="left:663px;top:604px;width:478px;height:1px;background:repeating-linear-gradient(90deg,transparent 0,transparent 1px,#bcbcbc 1px,#bcbcbc 3px,transparent 3px,transparent 5px)"></div>
<div style="left:918px;top:583px;width:1px;height:17px;background:#c9c9c9"></div>
<div style="left:962px;top:583px;width:1px;height:17px;background:#c9c9c9"></div>
<div style="left:1068px;top:583px;width:1px;height:17px;background:#c9c9c9"></div>
<span class="tb" style="letter-spacing:0.02px;left:668.5px;top:584px">STATUS_BYTE</span>
<span class="tr" style="letter-spacing:0.05px;left:925.5px;top:584px">0x78</span>
<div style="left:969px;top:581px;width:80px;height:20px;border:1px solid #c9bcae;background:#fff;box-sizing:border-box"></div>
<div style="left:1032px;top:583px;width:15px;height:16px;border:1px solid #6e6e6e;border-radius:2.5px;background:linear-gradient(#f8f8f8,#ebebeb);box-sizing:border-box"></div>
<svg style="left:1035px;top:587.5px" width="9" height="7" viewBox="0 0 9 7"><path d="M0.9 1.1l3.6 4.1 3.6-4.1" fill="none" stroke="#505050" stroke-width="1.05"/></svg>
<span class="tr" style="letter-spacing:-0.14px;right:353.64px;text-align:right;top:584px">01000000</span>
<span class="tr" style="letter-spacing:0.05px;left:1078.7px;top:585px">0x40</span>
<div style="left:663px;top:605px;width:478px;height:27px;background:#efefef"></div>
<div style="left:663px;top:631px;width:478px;height:1px;background:repeating-linear-gradient(90deg,transparent 0,transparent 1px,#bcbcbc 1px,#bcbcbc 3px,transparent 3px,transparent 5px)"></div>
<div style="left:918px;top:610px;width:1px;height:17px;background:#c9c9c9"></div>
<div style="left:962px;top:610px;width:1px;height:17px;background:#c9c9c9"></div>
<div style="left:1068px;top:610px;width:1px;height:17px;background:#c9c9c9"></div>
<span class="tb" style="letter-spacing:0.27px;left:668.5px;top:611px">STATUS_WORD</span>
<span class="tr" style="letter-spacing:0.05px;left:925.5px;top:611px">0x79</span>
<div style="left:969px;top:608px;width:80px;height:20px;border:1px solid #c9bcae;background:#fff;box-sizing:border-box"></div>
<div style="left:1032px;top:610px;width:15px;height:16px;border:1px solid #6e6e6e;border-radius:2.5px;background:linear-gradient(#f8f8f8,#ebebeb);box-sizing:border-box"></div>
<svg style="left:1035px;top:614.5px" width="9" height="7" viewBox="0 0 9 7"><path d="M0.9 1.1l3.6 4.1 3.6-4.1" fill="none" stroke="#505050" stroke-width="1.05"/></svg>
<span class="tr" style="letter-spacing:-0.71px;left:996px;top:611px">Click</span>
<span class="tb" style="letter-spacing:0.91px;left:1018px;top:611px">...</span>
<span class="tr" style="letter-spacing:-0.02px;left:1078.7px;top:612px">0x0000</span>
<div style="left:663px;top:632px;width:478px;height:27px;background:#e8e8e8"></div>
<div style="left:663px;top:658px;width:478px;height:1px;background:repeating-linear-gradient(90deg,transparent 0,transparent 1px,#bcbcbc 1px,#bcbcbc 3px,transparent 3px,transparent 5px)"></div>
<div style="left:918px;top:637px;width:1px;height:17px;background:#c9c9c9"></div>
<div style="left:962px;top:637px;width:1px;height:17px;background:#c9c9c9"></div>
<div style="left:1068px;top:637px;width:1px;height:17px;background:#c9c9c9"></div>
<span class="tb" style="letter-spacing:0.2px;left:668.5px;top:638px">STATUS_VOUT</span>
<span class="tr" style="letter-spacing:-0.03px;left:925.5px;top:638px">0x7A</span>
<div style="left:969px;top:635px;width:80px;height:20px;border:1px solid #c9bcae;background:#fff;box-sizing:border-box"></div>
<div style="left:1032px;top:637px;width:15px;height:16px;border:1px solid #6e6e6e;border-radius:2.5px;background:linear-gradient(#f8f8f8,#ebebeb);box-sizing:border-box"></div>
<svg style="left:1035px;top:641.5px" width="9" height="7" viewBox="0 0 9 7"><path d="M0.9 1.1l3.6 4.1 3.6-4.1" fill="none" stroke="#505050" stroke-width="1.05"/></svg>
<span class="tr" style="letter-spacing:-0.14px;right:353.64px;text-align:right;top:638px">00000000</span>
<span class="tr" style="letter-spacing:0.05px;left:1078.7px;top:639px">0x00</span>
<div style="left:663px;top:659px;width:478px;height:27px;background:#efefef"></div>
<div style="left:663px;top:685px;width:478px;height:1px;background:repeating-linear-gradient(90deg,transparent 0,transparent 1px,#bcbcbc 1px,#bcbcbc 3px,transparent 3px,transparent 5px)"></div>
<div style="left:918px;top:664px;width:1px;height:17px;background:#c9c9c9"></div>
<div style="left:962px;top:664px;width:1px;height:17px;background:#c9c9c9"></div>
<div style="left:1068px;top:664px;width:1px;height:17px;background:#c9c9c9"></div>
<span class="tb" style="letter-spacing:0.42px;left:668.5px;top:665px">STATUS_IOUT</span>
<span class="tr" style="letter-spacing:-0.36px;left:925.5px;top:665px">0x7B</span>
<div style="left:969px;top:662px;width:80px;height:20px;border:1px solid #c9bcae;background:#fff;box-sizing:border-box"></div>
<div style="left:1032px;top:664px;width:15px;height:16px;border:1px solid #6e6e6e;border-radius:2.5px;background:linear-gradient(#f8f8f8,#ebebeb);box-sizing:border-box"></div>
<svg style="left:1035px;top:668.5px" width="9" height="7" viewBox="0 0 9 7"><path d="M0.9 1.1l3.6 4.1 3.6-4.1" fill="none" stroke="#505050" stroke-width="1.05"/></svg>
<span class="tr" style="letter-spacing:-0.14px;right:353.64px;text-align:right;top:665px">00000000</span>
<span class="tr" style="letter-spacing:0.05px;left:1078.7px;top:666px">0x00</span>
<div style="left:663px;top:686px;width:478px;height:27px;background:#e8e8e8"></div>
<div style="left:663px;top:712px;width:478px;height:1px;background:repeating-linear-gradient(90deg,transparent 0,transparent 1px,#bcbcbc 1px,#bcbcbc 3px,transparent 3px,transparent 5px)"></div>
<div style="left:918px;top:691px;width:1px;height:17px;background:#c9c9c9"></div>
<div style="left:962px;top:691px;width:1px;height:17px;background:#c9c9c9"></div>
<div style="left:1068px;top:691px;width:1px;height:17px;background:#c9c9c9"></div>
<span class="tb" style="letter-spacing:0.36px;left:668.5px;top:692px">STATUS_INPUT</span>
<span class="tr" style="letter-spacing:-0.23px;left:925.5px;top:692px">0x7C</span>
<div style="left:969px;top:689px;width:80px;height:20px;border:1px solid #c9bcae;background:#fff;box-sizing:border-box"></div>
<div style="left:1032px;top:691px;width:15px;height:16px;border:1px solid #6e6e6e;border-radius:2.5px;background:linear-gradient(#f8f8f8,#ebebeb);box-sizing:border-box"></div>
<svg style="left:1035px;top:695.5px" width="9" height="7" viewBox="0 0 9 7"><path d="M0.9 1.1l3.6 4.1 3.6-4.1" fill="none" stroke="#505050" stroke-width="1.05"/></svg>
<span class="tr" style="letter-spacing:-0.14px;right:353.64px;text-align:right;top:692px">00000000</span>
<span class="tr" style="letter-spacing:0.05px;left:1078.7px;top:693px">0x00</span>
<div style="left:663px;top:713px;width:478px;height:27px;background:#efefef"></div>
<div style="left:663px;top:739px;width:478px;height:1px;background:repeating-linear-gradient(90deg,transparent 0,transparent 1px,#bcbcbc 1px,#bcbcbc 3px,transparent 3px,transparent 5px)"></div>
<div style="left:918px;top:718px;width:1px;height:17px;background:#c9c9c9"></div>
<div style="left:962px;top:718px;width:1px;height:17px;background:#c9c9c9"></div>
<div style="left:1068px;top:718px;width:1px;height:17px;background:#c9c9c9"></div>
<span class="tb" style="letter-spacing:0.03px;left:668.5px;top:719px">STATUS_TEMPERATURE</span>
<span class="tr" style="letter-spacing:-0.23px;left:925.5px;top:719px">0x7D</span>
<div style="left:969px;top:716px;width:80px;height:20px;border:1px solid #c9bcae;background:#fff;box-sizing:border-box"></div>
<div style="left:1032px;top:718px;width:15px;height:16px;border:1px solid #6e6e6e;border-radius:2.5px;background:linear-gradient(#f8f8f8,#ebebeb);box-sizing:border-box"></div>
<svg style="left:1035px;top:722.5px" width="9" height="7" viewBox="0 0 9 7"><path d="M0.9 1.1l3.6 4.1 3.6-4.1" fill="none" stroke="#505050" stroke-width="1.05"/></svg>
<span class="tr" style="letter-spacing:-0.14px;right:353.64px;text-align:right;top:719px">00000000</span>
<span class="tr" style="letter-spacing:0.05px;left:1078.7px;top:720px">0x00</span>
<div style="left:663px;top:740px;width:478px;height:27px;background:#e8e8e8"></div>
<div style="left:663px;top:766px;width:478px;height:1px;background:repeating-linear-gradient(90deg,transparent 0,transparent 1px,#bcbcbc 1px,#bcbcbc 3px,transparent 3px,transparent 5px)"></div>
<div style="left:918px;top:745px;width:1px;height:17px;background:#c9c9c9"></div>
<div style="left:962px;top:745px;width:1px;height:17px;background:#c9c9c9"></div>
<div style="left:1068px;top:745px;width:1px;height:17px;background:#c9c9c9"></div>
<span class="tb" style="letter-spacing:0.19px;left:668.5px;top:746px">STATUS_CML</span>
<span class="tr" style="letter-spacing:-0.36px;left:925.5px;top:746px">0x7E</span>
<div style="left:969px;top:743px;width:80px;height:20px;border:1px solid #c9bcae;background:#fff;box-sizing:border-box"></div>
<div style="left:1032px;top:745px;width:15px;height:16px;border:1px solid #6e6e6e;border-radius:2.5px;background:linear-gradient(#f8f8f8,#ebebeb);box-sizing:border-box"></div>
<svg style="left:1035px;top:749.5px" width="9" height="7" viewBox="0 0 9 7"><path d="M0.9 1.1l3.6 4.1 3.6-4.1" fill="none" stroke="#505050" stroke-width="1.05"/></svg>
<span class="tr" style="letter-spacing:-0.14px;right:353.64px;text-align:right;top:746px">00000000</span>
<span class="tr" style="letter-spacing:0.05px;left:1078.7px;top:747px">0x00</span>
<div style="left:663px;top:767px;width:478px;height:27px;background:#efefef"></div>
<div style="left:663px;top:793px;width:478px;height:1px;background:repeating-linear-gradient(90deg,transparent 0,transparent 1px,#bcbcbc 1px,#bcbcbc 3px,transparent 3px,transparent 5px)"></div>
<div style="left:918px;top:772px;width:1px;height:17px;background:#c9c9c9"></div>
<div style="left:962px;top:772px;width:1px;height:17px;background:#c9c9c9"></div>
<div style="left:1068px;top:772px;width:1px;height:17px;background:#c9c9c9"></div>
<span class="tb" style="letter-spacing:0.09px;left:668.5px;top:773px">STATUS_OTHER</span>
<span class="tr" style="letter-spacing:-0.16px;left:925.5px;top:773px">0x7F</span>
<div style="left:969px;top:770px;width:80px;height:20px;border:1px solid #c9bcae;background:#fff;box-sizing:border-box"></div>
<div style="left:1032px;top:772px;width:15px;height:16px;border:1px solid #6e6e6e;border-radius:2.5px;background:linear-gradient(#f8f8f8,#ebebeb);box-sizing:border-box"></div>
<svg style="left:1035px;top:776.5px" width="9" height="7" viewBox="0 0 9 7"><path d="M0.9 1.1l3.6 4.1 3.6-4.1" fill="none" stroke="#505050" stroke-width="1.05"/></svg>
<span class="tr" style="letter-spacing:-0.14px;right:353.64px;text-align:right;top:773px">00000000</span>
<span class="tr" style="letter-spacing:0.05px;left:1078.7px;top:774px">0x00</span>
<div style="left:663px;top:794px;width:478px;height:27px;background:#e8e8e8"></div>
<div style="left:663px;top:820px;width:478px;height:1px;background:repeating-linear-gradient(90deg,transparent 0,transparent 1px,#bcbcbc 1px,#bcbcbc 3px,transparent 3px,transparent 5px)"></div>
<div style="left:918px;top:799px;width:1px;height:17px;background:#c9c9c9"></div>
<div style="left:962px;top:799px;width:1px;height:17px;background:#c9c9c9"></div>
<div style="left:1068px;top:799px;width:1px;height:17px;background:#c9c9c9"></div>
<span class="tb" style="letter-spacing:0.12px;left:668.5px;top:800px">READ_VIN</span>
<span class="tb" style="letter-spacing:0.15px;left:730.5px;top:800px">phase ALL</span>
<span class="tr" style="letter-spacing:0.05px;left:925.5px;top:800px">0x88</span>
<span class="tr10" style="letter-spacing:-0.03px;right:334.03px;text-align:right;top:801px">4.758</span>
<span class="tr10" style="transform:scaleX(0.914);transform-origin:0 0;left:1051px;top:802px">V</span>
<span class="tr" style="letter-spacing:-0.23px;left:1078.7px;top:801px">0xCA61</span>
<div style="left:663px;top:821px;width:478px;height:27px;background:#efefef"></div>
<div style="left:663px;top:847px;width:478px;height:1px;background:repeating-linear-gradient(90deg,transparent 0,transparent 1px,#bcbcbc 1px,#bcbcbc 3px,transparent 3px,transparent 5px)"></div>
<div style="left:918px;top:826px;width:1px;height:17px;background:#c9c9c9"></div>
<div style="left:962px;top:826px;width:1px;height:17px;background:#c9c9c9"></div>
<div style="left:1068px;top:826px;width:1px;height:17px;background:#c9c9c9"></div>
<span class="tb" style="letter-spacing:-0.11px;left:668.5px;top:827px">READ_VOUT</span>
<span class="tb" style="letter-spacing:0.15px;left:741px;top:827px">phase ALL</span>
<span class="tr" style="letter-spacing:-0.36px;left:925.5px;top:827px">0x8B</span>
<span class="tr10" style="letter-spacing:-0.03px;right:334.03px;text-align:right;top:828px">0.794922</span>
<span class="tr10" style="transform:scaleX(0.914);transform-origin:0 0;left:1051px;top:829px">V</span>
<span class="tr" style="letter-spacing:-0.02px;left:1078.7px;top:828px">0x0197</span>
<div style="left:663px;top:848px;width:478px;height:27px;background:#e8e8e8"></div>
<div style="left:663px;top:874px;width:478px;height:1px;background:repeating-linear-gradient(90deg,transparent 0,transparent 1px,#bcbcbc 1px,#bcbcbc 3px,transparent 3px,transparent 5px)"></div>
<div style="left:918px;top:853px;width:1px;height:17px;background:#c9c9c9"></div>
<div style="left:962px;top:853px;width:1px;height:17px;background:#c9c9c9"></div>
<div style="left:1068px;top:853px;width:1px;height:17px;background:#c9c9c9"></div>
</div></div>
<div style="left:1350px;top:103px;width:17px;height:752px;background:linear-gradient(90deg,#f1efe6,#fbfaf6 40%,#fdfdfb)"></div>
<div style="left:1350px;top:103px;width:17px;height:17px;border:1px solid #7d7d7d;border-radius:2px;background:linear-gradient(#fbfbfb,#e6e6e6);box-sizing:border-box"></div>
<div style="left:1350px;top:838px;width:17px;height:17px;border:1px solid #7d7d7d;border-radius:2px;background:linear-gradient(#fbfbfb,#e6e6e6);box-sizing:border-box"></div>
<div style="left:1350px;top:121px;width:17px;height:393px;border:1px solid #7d7d7d;border-radius:2px;background:linear-gradient(90deg,#f7f7f7,#e6e6e6);box-sizing:border-box"></div>
<div style="left:1355px;top:315px;width:7px;height:1px;background:#777"></div>
<div style="left:1355px;top:317px;width:7px;height:1px;background:#777"></div>
<div style="left:1355px;top:319px;width:7px;height:1px;background:#777"></div>
<svg style="left:1354px;top:108px" width="9" height="7" viewBox="0 0 9 7"><path d="M1 5.8l3.5-4 3.5 4" fill="none" stroke="#444" stroke-width="1.1"/></svg>
<svg style="left:1354px;top:843px" width="9" height="7" viewBox="0 0 9 7"><path d="M1 1.2l3.5 4 3.5-4" fill="none" stroke="#444" stroke-width="1.1"/></svg>
<div style="left:172px;top:855px;width:1178px;height:17px;background:linear-gradient(#f1efe6,#fbfaf6 40%,#fdfdfb)"></div>
<div style="left:1350px;top:855px;width:17px;height:17px;background:#f0f0f0"></div>
<div style="left:172px;top:855px;width:17px;height:17px;border:1px solid #7d7d7d;border-radius:2px;background:linear-gradient(#fbfbfb,#e6e6e6);box-sizing:border-box"></div>
<div style="left:1333px;top:855px;width:17px;height:17px;border:1px solid #7d7d7d;border-radius:2px;background:linear-gradient(#fbfbfb,#e6e6e6);box-sizing:border-box"></div>
<div style="left:190px;top:855px;width:1028px;height:17px;border:1px solid #7d7d7d;border-radius:2px;background:linear-gradient(#fbfbfb,#e6e6e6);box-sizing:border-box"></div>
<div style="left:701px;top:860px;width:1px;height:7px;background:#777"></div>
<div style="left:703px;top:860px;width:1px;height:7px;background:#777"></div>
<div style="left:705px;top:860px;width:1px;height:7px;background:#777"></div>
<svg style="left:177px;top:859px" width="7" height="9" viewBox="0 0 7 9"><path d="M5.8 1L1.8 4.5l4 3.5" fill="none" stroke="#444" stroke-width="1.1"/></svg>
<svg style="left:1338px;top:859px" width="7" height="9" viewBox="0 0 7 9"><path d="M1.2 1l4 3.5-4 3.5" fill="none" stroke="#444" stroke-width="1.1"/></svg>
<div style="left:169px;top:893px;width:1202px;height:79px;background:#f1f1f1;border:1px solid #e2e2e2;box-sizing:border-box"></div>
<div style="left:176px;top:900px;width:1190px;height:68px;background:#fff"></div>
<span class="tr" style="letter-spacing:-0.19px;left:179.5px;top:900px">17:18:29.654: USB-SAA #1: CONTROL1 now Low</span>
<span class="tr" style="letter-spacing:-0.19px;left:179.5px;top:913px">17:18:29.656: USB-SAA #1: CONTROL2 now Low</span>
<span class="tr" style="letter-spacing:-0.19px;left:179.5px;top:926px">17:18:29.657: USB-SAA #1: CONTROL3 now Low</span>
<span class="tr" style="letter-spacing:-0.19px;left:179.5px;top:939px">17:18:29.658: USB-SAA #1: CONTROL4 now Low</span>
<span class="tr" style="letter-spacing:-0.19px;left:179.5px;top:952px">17:18:29.659: USB-SAA #1: CONTROL5 now Low</span>
<div style="left:1349px;top:900px;width:17px;height:68px;background:linear-gradient(90deg,#f3f3f3,#fcfcfc)"></div>
<div style="left:1349px;top:900px;width:17px;height:17px;border:1px solid #cdc6be;border-radius:2px;background:#fbfbfb;box-sizing:border-box"></div>
<div style="left:1349px;top:951px;width:17px;height:17px;border:1px solid #cdc6be;border-radius:2px;background:#fbfbfb;box-sizing:border-box"></div>
<svg style="left:1352.5px;top:905px" width="10" height="7" viewBox="0 0 10 7"><path d="M1.5 5.5l3.5-3.5 3.5 3.5" fill="none" stroke="#adadad" stroke-width="1.1"/></svg>
<svg style="left:1352.5px;top:956px" width="10" height="7" viewBox="0 0 10 7"><path d="M1.5 1.5l3.5 3.5 3.5-3.5" fill="none" stroke="#adadad" stroke-width="1.1"/></svg>
<div style="left:169px;top:971px;width:70px;height:21px;background:#fff;border:1px solid #e2e2e2;border-top:none;box-sizing:border-box"></div>
<span class="ms" style="letter-spacing:0.29px;left:177px;top:977px">PMBus Log</span>
<svg style="left:1349px;top:975px" width="17" height="18" viewBox="0 0 17 18"><path d="M2.4 6.2l1.5 8.9c1.5 1.5 7.3 1.5 8.8 0l1.5-8.9z" fill="#c2c0ad" stroke="#2e2e26" stroke-width="1"/><path d="M5.2 8.5l.5 7M8.3 9v7.2M11.4 8.5l-.5 7" stroke="#77756a" stroke-width="1.1"/><ellipse cx="8.3" cy="5.2" rx="6.6" ry="3.9" fill="#e4e2d4" stroke="#2a2a22" stroke-width="1.1"/><ellipse cx="8.3" cy="4.2" rx="2.2" ry="1" fill="#6f6e63"/><path d="M16.5 2v15.5H1" fill="none" stroke="#b9b9b9" stroke-width=".8"/></svg>
<div style="left:4px;top:998px;width:1374px;height:23px;background:linear-gradient(#f4f4f4,#e9e9e9);border:1px solid #6d6d6d;box-sizing:border-box;box-shadow:inset 0 0 0 1px #fff"></div>
<div style="left:6px;top:1000px;width:282px;height:19px;border:1px solid #a5a5a5;box-sizing:border-box;background:linear-gradient(#f5f5f5,#ebebeb)"></div>
<div style="left:289px;top:1000px;width:214px;height:19px;border:1px solid #a5a5a5;box-sizing:border-box;background:linear-gradient(#f5f5f5,#ebebeb)"></div>
<div style="left:504px;top:1000px;width:70px;height:19px;border:1px solid #a5a5a5;box-sizing:border-box;background:linear-gradient(#f5f5f5,#ebebeb)"></div>
<span class="ms" style="letter-spacing:0.24px;left:11px;top:1003px">Fusion Digital Power Designer v7.7.3.4.Alpha (For testing)</span>
<span class="ms" style="letter-spacing:0.2px;left:293.5px;top:1003px">TPSM8D6C24 @ PMBus Address 20d (14h)</span>
<span class="ms" style="letter-spacing:0.26px;left:510.5px;top:1003px">* Not Saved</span>
</body></html>
